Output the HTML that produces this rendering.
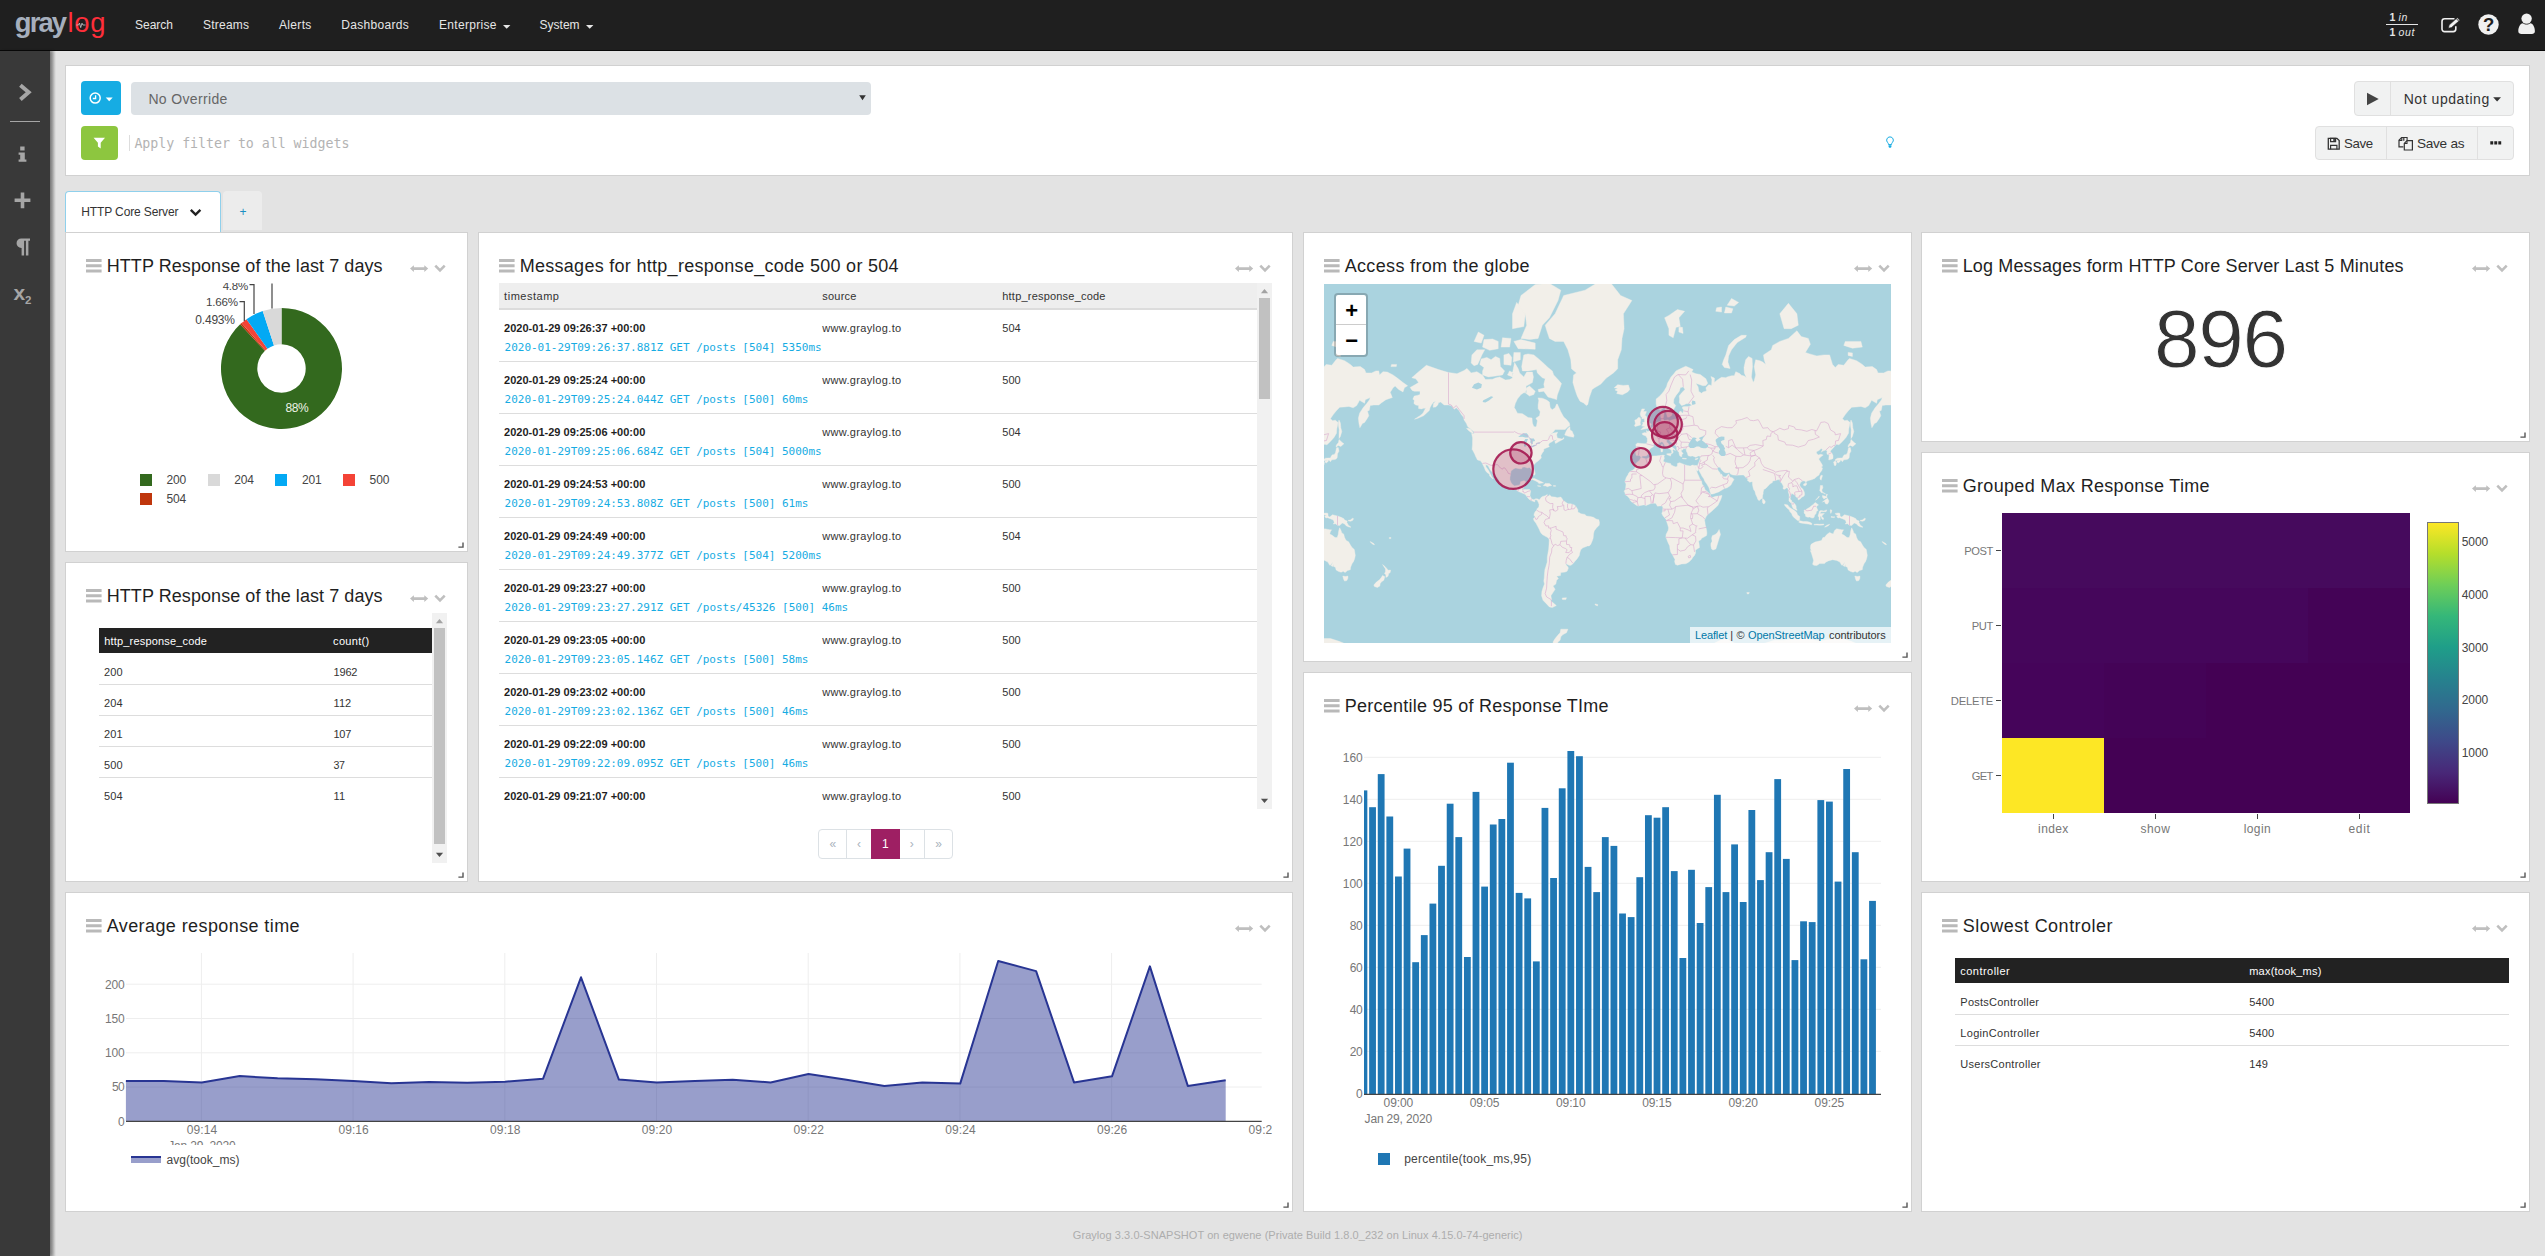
<!DOCTYPE html>
<html lang="en"><head><meta charset="utf-8"><title>Graylog - HTTP Core Server</title>
<style>
html,body{margin:0;padding:0;}
body{width:2545px;height:1256px;overflow:hidden;background:#e3e3e3;position:relative;font-family:'Liberation Sans',sans-serif;font-size:12px;color:#333;}
.t{position:absolute;white-space:pre;line-height:1;}
.a{position:absolute;box-sizing:border-box;}
.w{position:absolute;box-sizing:border-box;background:#fff;border:1px solid #d1d1d1;}
svg{position:absolute;overflow:visible;}
svg text{font-family:'Liberation Sans',sans-serif;}

</style></head>
<body>
<div class="a" style="left:0;top:0;width:2545px;height:51px;background:#1f1f1f;border-bottom:1px solid #080808"></div>
<span class="t" style="left:14.80px;top:9.00px;font-size:27.4px;color:#a6afbd;font-family:'Liberation Sans', sans-serif;font-weight:700;letter-spacing:-1.886px;">gray</span>
<span class="t" style="left:67.40px;top:9.00px;font-size:27.4px;color:#ff2e3a;font-family:'Liberation Sans', sans-serif;letter-spacing:0.719px;">log</span>
<svg style="left:76px;top:20px" width="10" height="10"><path d="M0.3 5h2.2l1-2 1.2 4.6 1.3-4.4 0.9 1.8h2.6" fill="none" stroke="#c8ccd2" stroke-width="0.8"/></svg>
<span class="t" style="left:135.00px;top:19.00px;font-size:12px;color:#e6e6e6;font-family:'Liberation Sans', sans-serif;letter-spacing:-0.006px;">Search</span>
<span class="t" style="left:203.00px;top:19.00px;font-size:12px;color:#e6e6e6;font-family:'Liberation Sans', sans-serif;letter-spacing:0.219px;">Streams</span>
<span class="t" style="left:279.00px;top:19.00px;font-size:12px;color:#e6e6e6;font-family:'Liberation Sans', sans-serif;letter-spacing:0.322px;">Alerts</span>
<span class="t" style="left:341.30px;top:19.00px;font-size:12px;color:#e6e6e6;font-family:'Liberation Sans', sans-serif;letter-spacing:0.309px;">Dashboards</span>
<span class="t" style="left:439.00px;top:19.00px;font-size:12px;color:#e6e6e6;font-family:'Liberation Sans', sans-serif;letter-spacing:0.300px;">Enterprise</span>
<span class="t" style="left:539.60px;top:19.00px;font-size:12px;color:#e6e6e6;font-family:'Liberation Sans', sans-serif;letter-spacing:-0.003px;">System</span>
<svg style="left:503px;top:24.5px" width="8" height="4"><path d="M0 0h7.4l-3.7 3.7z" fill="#e6e6e6"/></svg>
<svg style="left:585.6px;top:24.5px" width="8" height="4"><path d="M0 0h7.4l-3.7 3.7z" fill="#e6e6e6"/></svg>
<span class="t" style="left:2389.50px;top:12.00px;font-size:10.5px;color:#e6e6e6;font-family:'Liberation Sans', sans-serif;font-weight:700;">1</span>
<span class="t" style="left:2398.50px;top:12.00px;font-size:10.5px;color:#e6e6e6;font-family:'Liberation Sans', sans-serif;font-style:italic;letter-spacing:0.713px;">in</span>
<span class="t" style="left:2389.50px;top:27.00px;font-size:10.5px;color:#e6e6e6;font-family:'Liberation Sans', sans-serif;font-weight:700;">1</span>
<span class="t" style="left:2398.50px;top:27.00px;font-size:10.5px;color:#e6e6e6;font-family:'Liberation Sans', sans-serif;font-style:italic;letter-spacing:0.695px;">out</span>
<div class="a" style="left:2386px;top:24px;width:32px;height:1px;background:#e6e6e6"></div>
<svg style="left:2440px;top:16px" width="22" height="18"><path d="M14.5 2.8H4.6a2.6 2.6 0 0 0-2.6 2.6v7.6a2.6 2.6 0 0 0 2.6 2.6h8.6a2.6 2.6 0 0 0 2.6-2.6V10.2" fill="none" stroke="#f0f0f0" stroke-width="1.6"/><path d="M8.4 12.2l0.7-3.1 8.2-7.4 2.5 2.6-8.3 7.3z" fill="#f0f0f0" stroke="#1f1f1f" stroke-width="0.6"/><path d="M16.3 2.6l2.4 2.5" stroke="#1f1f1f" stroke-width="0.9"/></svg>
<svg style="left:2478px;top:13.5px" width="21" height="21"><circle cx="10.5" cy="10.5" r="10.2" fill="#f0f0f0"/></svg>
<span class="t" style="left:2482.94px;top:16.00px;font-size:18.5px;color:#1f1f1f;font-family:'Liberation Sans', sans-serif;font-weight:700;">?</span>
<svg style="left:2516px;top:12px" width="21" height="24"><circle cx="10.6" cy="6.6" r="5.2" fill="#f0f0f0"/><path d="M2.3 19.2c0-4.6 2.4-8 4.6-8 1 .9 2.3 1.4 3.7 1.4s2.7-.5 3.7-1.4c2.2 0 4.6 3.4 4.6 8 0 1.800-1.400 2.800-3 2.800H5.300c-1.600 0-3-1-3-2.800z" fill="#f0f0f0"/></svg>
<div class="a" style="left:0;top:51px;width:50px;height:1205px;background:#393939;box-shadow:3px 0 3px rgba(0,0,0,0.25)"></div>
<div class="a" style="left:50px;top:51px;width:6px;height:1205px;background:linear-gradient(to right,rgba(0,0,0,0.28),rgba(0,0,0,0))"></div>
<svg style="left:17px;top:82px" width="16" height="21"><path d="M3.400 3.200l8.300 7.100-8.300 7.100" fill="none" stroke="#a6a6a6" stroke-width="3.900"/></svg>
<div class="a" style="left:10px;top:121px;width:30px;height:1px;background:#a6a6a6"></div>
<svg style="left:18px;top:146px" width="10" height="17"><path d="M2.2 0.500h4.400v4H2.200zM0.600 6.400h6.200v7h1.600v2.400H0.600v-2.400h1.600v-4.600H0.600z" fill="#a6a6a6"/></svg>
<svg style="left:14px;top:192px" width="18" height="17"><path d="M6.700 0.400h3.600v6.100h6.100v3.600h-6.100v6.100H6.700v-6.100H0.600V6.500h6.100z" fill="#a6a6a6"/></svg>
<svg style="left:15px;top:238px" width="16" height="18"><path d="M6.300 0.400h8.700v2.400h-1.600v14.700h-2.500V2.800H9.100v14.700H6.600V9.900H6.300a4.750 4.750 0 0 1 0-9.500z" fill="#a6a6a6"/></svg>
<span class="t" style="left:13.50px;top:282.00px;font-size:21px;color:#a6a6a6;font-family:'Liberation Sans', sans-serif;font-weight:700;">x</span>
<span class="t" style="left:24.90px;top:295.00px;font-size:11.5px;color:#a6a6a6;font-family:'Liberation Sans', sans-serif;font-weight:700;">2</span>
<div class="w" style="left:65px;top:65px;width:2465px;height:111px;"></div>
<div class="a" style="left:81px;top:81px;width:40px;height:34px;background:#16ace3;border-radius:4px"></div>
<div class="a" style="left:131px;top:81.5px;width:740px;height:33px;background:#dce1e5;border-radius:4px"></div>
<span class="t" style="left:148.40px;top:92.00px;font-size:14px;color:#666;font-family:'Liberation Sans', sans-serif;letter-spacing:0.353px;">No Override</span>
<div class="a" style="left:81px;top:126px;width:37px;height:34px;background:#8dc63f;border-radius:4px"></div>
<div class="a" style="left:129px;top:135px;width:1px;height:16px;background:#ddd"></div>
<span class="t" style="left:134.40px;top:137.00px;font-size:13.3px;color:#b3b3b3;font-family:'DejaVu Sans Mono', 'Liberation Mono', monospace;letter-spacing:-0.044px;">Apply filter to all widgets</span>
<svg style="left:88px;top:91px" width="26" height="14"><circle cx="7.2" cy="7.100" r="5" fill="none" stroke="#fff" stroke-width="1.500"/><path d="M7.600 4.200v3.300H4.800" fill="none" stroke="#fff" stroke-width="1.300"/><path d="M17.700 6.500h7l-3.500 3.700z" fill="#fff"/></svg>
<svg style="left:859px;top:95px" width="8" height="6"><path d="M0.200 0.300h6.600l-3.300 5z" fill="#333"/></svg>
<svg style="left:93px;top:137px" width="13" height="13"><path d="M0.600 0.800h11.400l-4.300 4.900v5.900l-2.800-2.100V5.700z" fill="#fff"/></svg>
<svg style="left:1885px;top:136px" width="10" height="13"><path d="M5 0.900a3.300 3.300 0 0 1 2.300 5.700c-0.600 0.700-0.800 1.200-0.800 2H3.500c0-0.800-0.200-1.300-0.800-2A3.300 3.300 0 0 1 5 0.900z" fill="none" stroke="#16ace3" stroke-width="1"/><path d="M3.600 9.300h2.800v1.600l-0.700 0.900H4.300l-0.700-0.900z" fill="#16ace3"/></svg>
<div class="a" style="left:2354px;top:81px;width:160px;height:35px;background:#f1f2f2;border:1px solid #e0e0e0;border-radius:4px"></div>
<div class="a" style="left:2390px;top:82px;width:1px;height:33px;background:#e0e0e0"></div>
<span class="t" style="left:2403.70px;top:92.00px;font-size:14px;color:#333;font-family:'Liberation Sans', sans-serif;letter-spacing:0.554px;">Not updating</span>
<div class="a" style="left:2315px;top:126px;width:199px;height:34px;background:#f1f2f2;border:1px solid #e0e0e0;border-radius:4px"></div>
<div class="a" style="left:2386px;top:127px;width:1px;height:32px;background:#e0e0e0"></div>
<div class="a" style="left:2477px;top:127px;width:1px;height:32px;background:#e0e0e0"></div>
<span class="t" style="left:2343.90px;top:137.00px;font-size:13.28px;color:#333;font-family:'Liberation Sans', sans-serif;letter-spacing:-0.294px;">Save</span>
<span class="t" style="left:2416.90px;top:137.00px;font-size:13.62px;color:#333;font-family:'Liberation Sans', sans-serif;letter-spacing:-0.239px;">Save as</span>
<svg style="left:2366px;top:92px" width="14" height="14"><path d="M1 0.800l11.700 6.300L1 13.300z" fill="#444"/></svg>
<svg style="left:2493px;top:96.5px" width="9" height="5"><path d="M0.200 0.300h7.800l-3.900 4.300z" fill="#333"/></svg>
<svg style="left:2327px;top:136.500px" width="14" height="14"><path d="M1.300 1.300h8.600l2.300 2.300v8.600H1.300z" fill="none" stroke="#333" stroke-width="1.300"/><path d="M3.600 1.300h5v3.300h-5zM3.600 12.200V8.300h6.300v3.900" fill="none" stroke="#333" stroke-width="1.200"/><path d="M6.300 1.800h1.600v2.300H6.300z" fill="#333"/></svg>
<svg style="left:2398px;top:135.500px" width="16" height="16"><path d="M5.800 4.700V1.500h-2.200l-2.600 2.700v6.600h4.400" fill="none" stroke="#333" stroke-width="1.200"/><path d="M3.800 1.400v3h-2.900M5.800 1.500h3.300v3" fill="none" stroke="#333" stroke-width="1.100"/><path d="M9 4.700h5.400v9.300H6.300V7.400z" fill="none" stroke="#333" stroke-width="1.200"/><path d="M9 4.700v2.800H6.300" fill="none" stroke="#333" stroke-width="1.100"/></svg>
<svg style="left:2489.500px;top:140.500px" width="13" height="5"><path d="M0.300 0.300h2.900v3.200H0.300zM4.300 0.300h2.900v3.200H4.300zM8.300 0.300h2.900v3.200H8.300z" fill="#222"/></svg>
<div class="a" style="left:65px;top:191px;width:156px;height:42px;background:#fff;border:1px solid #8fd0ec;border-bottom:none;border-radius:4px 4px 0 0"></div>
<div class="a" style="left:223px;top:191px;width:39px;height:39px;background:#ececec;border-radius:4px 4px 0 0"></div>
<span class="t" style="left:81.30px;top:206.00px;font-size:12px;color:#333;font-family:'Liberation Sans', sans-serif;letter-spacing:-0.129px;">HTTP Core Server</span>
<span class="t" style="left:239.50px;top:206.00px;font-size:12px;color:#1a8ec2;font-family:'Liberation Sans', sans-serif;">+</span>
<svg style="left:189px;top:207px" width="14" height="11"><path d="M1.800 2.800l4.800 4.800 4.800-4.800" fill="none" stroke="#222" stroke-width="2.400"/></svg>
<div class="w" style="left:65px;top:232px;width:403px;height:320px"></div>
<svg style="left:86px;top:259px" width="16" height="14"><path d="M0 0h15.6v3H0zM0 5.2h15.6v3H0zM0 10.4h15.6v3H0z" fill="#b9b9b9"/></svg>
<span class="t" style="left:106.70px;top:257.00px;font-size:18px;color:#1f1f1f;font-family:'Liberation Sans', sans-serif;letter-spacing:0.067px;">HTTP Response of the last 7 days</span>
<svg style="left:410px;top:265px" width="19" height="8"><path d="M0 3.600l3.900-3.300v1.900h10.400V0.300l3.900 3.300-3.900 3.300V5H3.900v1.900z" fill="#bfbfbf"/></svg>
<svg style="left:433px;top:263px" width="14" height="10"><path d="M2.300 2.700l4.700 4.800 4.700-4.800" fill="none" stroke="#bfbfbf" stroke-width="2.600"/></svg>
<svg style="left:458px;top:542px" width="6" height="6"><path d="M5 0.4v4.700H0.400" fill="none" stroke="#555" stroke-width="1.400"/></svg>
<div class="w" style="left:65px;top:562px;width:403px;height:320px"></div>
<svg style="left:86px;top:589px" width="16" height="14"><path d="M0 0h15.6v3H0zM0 5.2h15.6v3H0zM0 10.4h15.6v3H0z" fill="#b9b9b9"/></svg>
<span class="t" style="left:106.70px;top:587.00px;font-size:18px;color:#1f1f1f;font-family:'Liberation Sans', sans-serif;letter-spacing:0.067px;">HTTP Response of the last 7 days</span>
<svg style="left:410px;top:595px" width="19" height="8"><path d="M0 3.600l3.900-3.300v1.900h10.400V0.300l3.900 3.300-3.900 3.300V5H3.900v1.900z" fill="#bfbfbf"/></svg>
<svg style="left:433px;top:593px" width="14" height="10"><path d="M2.300 2.700l4.700 4.800 4.700-4.800" fill="none" stroke="#bfbfbf" stroke-width="2.600"/></svg>
<svg style="left:458px;top:872px" width="6" height="6"><path d="M5 0.4v4.700H0.400" fill="none" stroke="#555" stroke-width="1.400"/></svg>
<div class="w" style="left:478px;top:232px;width:815px;height:650px"></div>
<svg style="left:499px;top:259px" width="16" height="14"><path d="M0 0h15.6v3H0zM0 5.2h15.6v3H0zM0 10.4h15.6v3H0z" fill="#b9b9b9"/></svg>
<span class="t" style="left:519.70px;top:257.00px;font-size:18px;color:#1f1f1f;font-family:'Liberation Sans', sans-serif;letter-spacing:0.284px;">Messages for http_response_code 500 or 504</span>
<svg style="left:1235px;top:265px" width="19" height="8"><path d="M0 3.600l3.900-3.300v1.900h10.400V0.300l3.900 3.300-3.900 3.300V5H3.900v1.900z" fill="#bfbfbf"/></svg>
<svg style="left:1258px;top:263px" width="14" height="10"><path d="M2.300 2.700l4.700 4.800 4.700-4.800" fill="none" stroke="#bfbfbf" stroke-width="2.600"/></svg>
<svg style="left:1283px;top:872px" width="6" height="6"><path d="M5 0.4v4.700H0.400" fill="none" stroke="#555" stroke-width="1.400"/></svg>
<div class="w" style="left:1303px;top:232px;width:609px;height:430px"></div>
<svg style="left:1324px;top:259px" width="16" height="14"><path d="M0 0h15.6v3H0zM0 5.2h15.6v3H0zM0 10.4h15.6v3H0z" fill="#b9b9b9"/></svg>
<span class="t" style="left:1344.70px;top:257.00px;font-size:18px;color:#1f1f1f;font-family:'Liberation Sans', sans-serif;letter-spacing:0.340px;">Access from the globe</span>
<svg style="left:1854px;top:265px" width="19" height="8"><path d="M0 3.600l3.900-3.300v1.900h10.400V0.300l3.900 3.300-3.900 3.300V5H3.900v1.900z" fill="#bfbfbf"/></svg>
<svg style="left:1877px;top:263px" width="14" height="10"><path d="M2.300 2.700l4.700 4.800 4.700-4.800" fill="none" stroke="#bfbfbf" stroke-width="2.600"/></svg>
<svg style="left:1902px;top:652px" width="6" height="6"><path d="M5 0.4v4.700H0.400" fill="none" stroke="#555" stroke-width="1.400"/></svg>
<div class="w" style="left:1303px;top:672px;width:609px;height:540px"></div>
<svg style="left:1324px;top:699px" width="16" height="14"><path d="M0 0h15.6v3H0zM0 5.2h15.6v3H0zM0 10.4h15.6v3H0z" fill="#b9b9b9"/></svg>
<span class="t" style="left:1344.70px;top:697.00px;font-size:18px;color:#1f1f1f;font-family:'Liberation Sans', sans-serif;letter-spacing:0.244px;">Percentile 95 of Response TIme</span>
<svg style="left:1854px;top:705px" width="19" height="8"><path d="M0 3.600l3.900-3.300v1.900h10.400V0.300l3.900 3.300-3.900 3.300V5H3.900v1.900z" fill="#bfbfbf"/></svg>
<svg style="left:1877px;top:703px" width="14" height="10"><path d="M2.300 2.700l4.700 4.800 4.700-4.800" fill="none" stroke="#bfbfbf" stroke-width="2.600"/></svg>
<svg style="left:1902px;top:1202px" width="6" height="6"><path d="M5 0.4v4.700H0.400" fill="none" stroke="#555" stroke-width="1.400"/></svg>
<div class="w" style="left:1921px;top:232px;width:609px;height:210px"></div>
<svg style="left:1942px;top:259px" width="16" height="14"><path d="M0 0h15.6v3H0zM0 5.2h15.6v3H0zM0 10.4h15.6v3H0z" fill="#b9b9b9"/></svg>
<span class="t" style="left:1962.70px;top:257.00px;font-size:18px;color:#1f1f1f;font-family:'Liberation Sans', sans-serif;letter-spacing:0.147px;">Log Messages form HTTP Core Server Last 5 Minutes</span>
<svg style="left:2472px;top:265px" width="19" height="8"><path d="M0 3.600l3.900-3.300v1.900h10.400V0.300l3.900 3.300-3.900 3.300V5H3.900v1.900z" fill="#bfbfbf"/></svg>
<svg style="left:2495px;top:263px" width="14" height="10"><path d="M2.300 2.700l4.700 4.800 4.700-4.800" fill="none" stroke="#bfbfbf" stroke-width="2.600"/></svg>
<svg style="left:2520px;top:432px" width="6" height="6"><path d="M5 0.4v4.700H0.400" fill="none" stroke="#555" stroke-width="1.400"/></svg>
<div class="w" style="left:1921px;top:452px;width:609px;height:430px"></div>
<svg style="left:1942px;top:479px" width="16" height="14"><path d="M0 0h15.6v3H0zM0 5.2h15.6v3H0zM0 10.4h15.6v3H0z" fill="#b9b9b9"/></svg>
<span class="t" style="left:1962.70px;top:477.00px;font-size:18px;color:#1f1f1f;font-family:'Liberation Sans', sans-serif;letter-spacing:0.324px;">Grouped Max Response Time</span>
<svg style="left:2472px;top:485px" width="19" height="8"><path d="M0 3.600l3.900-3.300v1.900h10.400V0.300l3.900 3.300-3.900 3.300V5H3.900v1.900z" fill="#bfbfbf"/></svg>
<svg style="left:2495px;top:483px" width="14" height="10"><path d="M2.300 2.700l4.700 4.800 4.700-4.800" fill="none" stroke="#bfbfbf" stroke-width="2.600"/></svg>
<svg style="left:2520px;top:872px" width="6" height="6"><path d="M5 0.4v4.700H0.400" fill="none" stroke="#555" stroke-width="1.400"/></svg>
<div class="w" style="left:1921px;top:892px;width:609px;height:320px"></div>
<svg style="left:1942px;top:919px" width="16" height="14"><path d="M0 0h15.6v3H0zM0 5.2h15.6v3H0zM0 10.4h15.6v3H0z" fill="#b9b9b9"/></svg>
<span class="t" style="left:1962.70px;top:917.00px;font-size:18px;color:#1f1f1f;font-family:'Liberation Sans', sans-serif;letter-spacing:0.490px;">Slowest Controler</span>
<svg style="left:2472px;top:925px" width="19" height="8"><path d="M0 3.600l3.900-3.300v1.900h10.400V0.300l3.900 3.300-3.900 3.300V5H3.900v1.900z" fill="#bfbfbf"/></svg>
<svg style="left:2495px;top:923px" width="14" height="10"><path d="M2.300 2.700l4.700 4.800 4.700-4.800" fill="none" stroke="#bfbfbf" stroke-width="2.600"/></svg>
<svg style="left:2520px;top:1202px" width="6" height="6"><path d="M5 0.4v4.700H0.400" fill="none" stroke="#555" stroke-width="1.400"/></svg>
<div class="w" style="left:65px;top:892px;width:1228px;height:320px"></div>
<svg style="left:86px;top:919px" width="16" height="14"><path d="M0 0h15.6v3H0zM0 5.2h15.6v3H0zM0 10.4h15.6v3H0z" fill="#b9b9b9"/></svg>
<span class="t" style="left:106.70px;top:917.00px;font-size:18px;color:#1f1f1f;font-family:'Liberation Sans', sans-serif;letter-spacing:0.406px;">Average response time</span>
<svg style="left:1235px;top:925px" width="19" height="8"><path d="M0 3.600l3.900-3.300v1.900h10.400V0.300l3.900 3.300-3.900 3.300V5H3.900v1.900z" fill="#bfbfbf"/></svg>
<svg style="left:1258px;top:923px" width="14" height="10"><path d="M2.300 2.700l4.700 4.800 4.700-4.800" fill="none" stroke="#bfbfbf" stroke-width="2.600"/></svg>
<svg style="left:1283px;top:1202px" width="6" height="6"><path d="M5 0.4v4.700H0.400" fill="none" stroke="#555" stroke-width="1.400"/></svg>
<span class="t" style="left:1072.80px;top:1230.00px;font-size:11px;color:#adadad;font-family:'Liberation Sans', sans-serif;letter-spacing:0.057px;">Graylog 3.3.0-SNAPSHOT on egwene (Private Build 1.8.0_232 on Linux 4.15.0-74-generic)</span>
<svg style="left:66px;top:284px" width="401" height="236" viewBox="66 284 401 236"><defs><clipPath id="pc"><rect x="66" y="283.5" width="401" height="240"/></clipPath></defs><g clip-path="url(#pc)"><path d="M281.50 308.00A60.5 60.5 0 1 1 240.14 324.34L264.96 350.84A24.2 24.2 0 1 0 281.50 344.30Z" fill="#33691e"/><path d="M240.14 324.34A60.5 60.5 0 0 1 241.53 323.08L265.51 350.33A24.2 24.2 0 0 0 264.96 350.84Z" fill="#bf360c"/><path d="M241.53 323.08A60.5 60.5 0 0 1 246.48 319.17L267.49 348.77A24.2 24.2 0 0 0 265.51 350.33Z" fill="#f44336"/><path d="M246.48 319.17A60.5 60.5 0 0 1 262.72 310.99L273.99 345.50A24.2 24.2 0 0 0 267.49 348.77Z" fill="#03a9f4"/><path d="M262.72 310.99A60.5 60.5 0 0 1 281.50 308.00L281.50 344.30A24.2 24.2 0 0 0 273.99 345.50Z" fill="#d9d9d9"/><path d="M249.5 284.7H254V314M239.5 301.7H244.3V321M272 280V308.5" fill="none" stroke="#444" stroke-width="1.2"/></g></svg>
<div class="a" style="left:200px;top:283px;width:60px;height:12px;overflow:hidden"><span class="t" style="left:22.70px;top:-2.00px;font-size:11.52px;color:#444;font-family:'Liberation Sans', sans-serif;letter-spacing:-0.255px;">4.8%</span></div>
<span class="t" style="left:206.10px;top:296.00px;font-size:11.62px;color:#444;font-family:'Liberation Sans', sans-serif;letter-spacing:-0.240px;">1.66%</span>
<span class="t" style="left:195.30px;top:314.00px;font-size:12px;color:#444;font-family:'Liberation Sans', sans-serif;letter-spacing:-0.201px;">0.493%</span>
<span class="t" style="left:285.50px;top:402.00px;font-size:12px;color:#eef3e6;font-family:'Liberation Sans', sans-serif;letter-spacing:-0.416px;">88%</span>
<div class="a" style="left:140.0px;top:474px;width:12px;height:12px;background:#33691e"></div>
<span class="t" style="left:166.50px;top:474.00px;font-size:12px;color:#444;font-family:'Liberation Sans', sans-serif;letter-spacing:-0.116px;">200</span>
<div class="a" style="left:207.7px;top:474px;width:12px;height:12px;background:#d9d9d9"></div>
<span class="t" style="left:234.20px;top:474.00px;font-size:12px;color:#444;font-family:'Liberation Sans', sans-serif;letter-spacing:-0.116px;">204</span>
<div class="a" style="left:275.4px;top:474px;width:12px;height:12px;background:#03a9f4"></div>
<span class="t" style="left:301.90px;top:474.00px;font-size:12px;color:#444;font-family:'Liberation Sans', sans-serif;letter-spacing:-0.116px;">201</span>
<div class="a" style="left:343.1px;top:474px;width:12px;height:12px;background:#f44336"></div>
<span class="t" style="left:369.60px;top:474.00px;font-size:12px;color:#444;font-family:'Liberation Sans', sans-serif;letter-spacing:-0.116px;">500</span>
<div class="a" style="left:140.0px;top:493px;width:12px;height:12px;background:#bf360c"></div>
<span class="t" style="left:166.50px;top:493.00px;font-size:12px;color:#444;font-family:'Liberation Sans', sans-serif;letter-spacing:-0.116px;">504</span>
<div class="a" style="left:99px;top:628px;width:333px;height:25px;background:#222"></div>
<span class="t" style="left:104.20px;top:636.00px;font-size:11px;color:#fff;font-family:'Liberation Sans', sans-serif;letter-spacing:0.183px;">http_response_code</span>
<span class="t" style="left:333.10px;top:636.00px;font-size:11px;color:#fff;font-family:'Liberation Sans', sans-serif;letter-spacing:0.308px;">count()</span>
<span class="t" style="left:104.10px;top:667.00px;font-size:11px;color:#333;font-family:'Liberation Sans', sans-serif;letter-spacing:0.120px;">200</span>
<span class="t" style="left:333.50px;top:667.00px;font-size:11px;color:#333;font-family:'Liberation Sans', sans-serif;letter-spacing:-0.161px;">1962</span>
<div class="a" style="left:99px;top:684px;width:333px;height:1px;background:#ddd"></div>
<span class="t" style="left:104.10px;top:698.00px;font-size:11px;color:#333;font-family:'Liberation Sans', sans-serif;letter-spacing:0.120px;">204</span>
<span class="t" style="left:333.50px;top:698.00px;font-size:11px;color:#333;font-family:'Liberation Sans', sans-serif;letter-spacing:0.102px;">112</span>
<div class="a" style="left:99px;top:715px;width:333px;height:1px;background:#ddd"></div>
<span class="t" style="left:104.10px;top:729.00px;font-size:11px;color:#333;font-family:'Liberation Sans', sans-serif;letter-spacing:0.120px;">201</span>
<span class="t" style="left:333.50px;top:729.00px;font-size:11px;color:#333;font-family:'Liberation Sans', sans-serif;letter-spacing:-0.305px;">107</span>
<div class="a" style="left:99px;top:746px;width:333px;height:1px;background:#ddd"></div>
<span class="t" style="left:104.10px;top:760.00px;font-size:11px;color:#333;font-family:'Liberation Sans', sans-serif;letter-spacing:0.120px;">500</span>
<span class="t" style="left:333.50px;top:760.00px;font-size:10.64px;color:#333;font-family:'Liberation Sans', sans-serif;letter-spacing:-0.345px;">37</span>
<div class="a" style="left:99px;top:777px;width:333px;height:1px;background:#ddd"></div>
<span class="t" style="left:104.10px;top:791.00px;font-size:11px;color:#333;font-family:'Liberation Sans', sans-serif;letter-spacing:0.120px;">504</span>
<span class="t" style="left:333.50px;top:791.00px;font-size:11px;color:#333;font-family:'Liberation Sans', sans-serif;letter-spacing:0.078px;">11</span>
<div class="a" style="left:432px;top:613px;width:15px;height:250px;background:#f1f1f1"></div>
<div class="a" style="left:434px;top:628px;width:11px;height:216px;background:#c1c1c1"></div>
<svg style="left:432px;top:613px" width="15" height="250"><path d="M3.9 10.2l3.600 -4.300 3.600 4.300z" fill="#a3a3a3"/><path d="M3.9 239.8l3.600 4.300 3.600 -4.300z" fill="#505050"/></svg>
<div class="a" style="left:499px;top:283px;width:758px;height:27px;background:#eee;border-bottom:2px solid #dcdcdc"></div>
<span class="t" style="left:504.10px;top:291.00px;font-size:11px;color:#333;font-family:'Liberation Sans', sans-serif;letter-spacing:0.519px;">timestamp</span>
<span class="t" style="left:822.20px;top:291.00px;font-size:11px;color:#333;font-family:'Liberation Sans', sans-serif;letter-spacing:0.254px;">source</span>
<span class="t" style="left:1002.30px;top:291.00px;font-size:11px;color:#333;font-family:'Liberation Sans', sans-serif;letter-spacing:0.201px;">http_response_code</span>
<div class="a" style="left:499px;top:310px;width:758px;height:497px;overflow:hidden">
<span class="t" style="left:5.10px;top:13.00px;font-size:11px;color:#1f1f1f;font-family:'Liberation Sans', sans-serif;font-weight:700;letter-spacing:0.009px;">2020-01-29 09:26:37 +00:00</span>
<span class="t" style="left:323.20px;top:13.00px;font-size:11px;color:#333;font-family:'Liberation Sans', sans-serif;letter-spacing:0.339px;">www.graylog.to</span>
<span class="t" style="left:503.30px;top:13.00px;font-size:11px;color:#333;font-family:'Liberation Sans', sans-serif;letter-spacing:-0.030px;">504</span>
<span class="t" style="left:5.60px;top:32.00px;font-size:11px;color:#16ace3;font-family:'DejaVu Sans Mono', 'Liberation Mono', monospace;letter-spacing:-0.018px;">2020-01-29T09:26:37.881Z GET /posts [504] 5350ms</span>
<div class="a" style="left:0;top:51px;width:758px;height:1px;background:#ddd"></div>
<span class="t" style="left:5.10px;top:65.00px;font-size:11px;color:#1f1f1f;font-family:'Liberation Sans', sans-serif;font-weight:700;letter-spacing:0.009px;">2020-01-29 09:25:24 +00:00</span>
<span class="t" style="left:323.20px;top:65.00px;font-size:11px;color:#333;font-family:'Liberation Sans', sans-serif;letter-spacing:0.339px;">www.graylog.to</span>
<span class="t" style="left:503.30px;top:65.00px;font-size:11px;color:#333;font-family:'Liberation Sans', sans-serif;letter-spacing:-0.030px;">500</span>
<span class="t" style="left:5.60px;top:84.00px;font-size:11px;color:#16ace3;font-family:'DejaVu Sans Mono', 'Liberation Mono', monospace;letter-spacing:-0.018px;">2020-01-29T09:25:24.044Z GET /posts [500] 60ms</span>
<div class="a" style="left:0;top:103px;width:758px;height:1px;background:#ddd"></div>
<span class="t" style="left:5.10px;top:117.00px;font-size:11px;color:#1f1f1f;font-family:'Liberation Sans', sans-serif;font-weight:700;letter-spacing:0.009px;">2020-01-29 09:25:06 +00:00</span>
<span class="t" style="left:323.20px;top:117.00px;font-size:11px;color:#333;font-family:'Liberation Sans', sans-serif;letter-spacing:0.339px;">www.graylog.to</span>
<span class="t" style="left:503.30px;top:117.00px;font-size:11px;color:#333;font-family:'Liberation Sans', sans-serif;letter-spacing:-0.030px;">504</span>
<span class="t" style="left:5.60px;top:136.00px;font-size:11px;color:#16ace3;font-family:'DejaVu Sans Mono', 'Liberation Mono', monospace;letter-spacing:-0.018px;">2020-01-29T09:25:06.684Z GET /posts [504] 5000ms</span>
<div class="a" style="left:0;top:155px;width:758px;height:1px;background:#ddd"></div>
<span class="t" style="left:5.10px;top:169.00px;font-size:11px;color:#1f1f1f;font-family:'Liberation Sans', sans-serif;font-weight:700;letter-spacing:0.009px;">2020-01-29 09:24:53 +00:00</span>
<span class="t" style="left:323.20px;top:169.00px;font-size:11px;color:#333;font-family:'Liberation Sans', sans-serif;letter-spacing:0.339px;">www.graylog.to</span>
<span class="t" style="left:503.30px;top:169.00px;font-size:11px;color:#333;font-family:'Liberation Sans', sans-serif;letter-spacing:-0.030px;">500</span>
<span class="t" style="left:5.60px;top:188.00px;font-size:11px;color:#16ace3;font-family:'DejaVu Sans Mono', 'Liberation Mono', monospace;letter-spacing:-0.018px;">2020-01-29T09:24:53.808Z GET /posts [500] 61ms</span>
<div class="a" style="left:0;top:207px;width:758px;height:1px;background:#ddd"></div>
<span class="t" style="left:5.10px;top:221.00px;font-size:11px;color:#1f1f1f;font-family:'Liberation Sans', sans-serif;font-weight:700;letter-spacing:0.009px;">2020-01-29 09:24:49 +00:00</span>
<span class="t" style="left:323.20px;top:221.00px;font-size:11px;color:#333;font-family:'Liberation Sans', sans-serif;letter-spacing:0.339px;">www.graylog.to</span>
<span class="t" style="left:503.30px;top:221.00px;font-size:11px;color:#333;font-family:'Liberation Sans', sans-serif;letter-spacing:-0.030px;">504</span>
<span class="t" style="left:5.60px;top:240.00px;font-size:11px;color:#16ace3;font-family:'DejaVu Sans Mono', 'Liberation Mono', monospace;letter-spacing:-0.018px;">2020-01-29T09:24:49.377Z GET /posts [504] 5200ms</span>
<div class="a" style="left:0;top:259px;width:758px;height:1px;background:#ddd"></div>
<span class="t" style="left:5.10px;top:273.00px;font-size:11px;color:#1f1f1f;font-family:'Liberation Sans', sans-serif;font-weight:700;letter-spacing:0.009px;">2020-01-29 09:23:27 +00:00</span>
<span class="t" style="left:323.20px;top:273.00px;font-size:11px;color:#333;font-family:'Liberation Sans', sans-serif;letter-spacing:0.339px;">www.graylog.to</span>
<span class="t" style="left:503.30px;top:273.00px;font-size:11px;color:#333;font-family:'Liberation Sans', sans-serif;letter-spacing:-0.030px;">500</span>
<span class="t" style="left:5.60px;top:292.00px;font-size:11px;color:#16ace3;font-family:'DejaVu Sans Mono', 'Liberation Mono', monospace;letter-spacing:-0.016px;">2020-01-29T09:23:27.291Z GET /posts/45326 [500] 46ms</span>
<div class="a" style="left:0;top:311px;width:758px;height:1px;background:#ddd"></div>
<span class="t" style="left:5.10px;top:325.00px;font-size:11px;color:#1f1f1f;font-family:'Liberation Sans', sans-serif;font-weight:700;letter-spacing:0.009px;">2020-01-29 09:23:05 +00:00</span>
<span class="t" style="left:323.20px;top:325.00px;font-size:11px;color:#333;font-family:'Liberation Sans', sans-serif;letter-spacing:0.339px;">www.graylog.to</span>
<span class="t" style="left:503.30px;top:325.00px;font-size:11px;color:#333;font-family:'Liberation Sans', sans-serif;letter-spacing:-0.030px;">500</span>
<span class="t" style="left:5.60px;top:344.00px;font-size:11px;color:#16ace3;font-family:'DejaVu Sans Mono', 'Liberation Mono', monospace;letter-spacing:-0.018px;">2020-01-29T09:23:05.146Z GET /posts [500] 58ms</span>
<div class="a" style="left:0;top:363px;width:758px;height:1px;background:#ddd"></div>
<span class="t" style="left:5.10px;top:377.00px;font-size:11px;color:#1f1f1f;font-family:'Liberation Sans', sans-serif;font-weight:700;letter-spacing:0.009px;">2020-01-29 09:23:02 +00:00</span>
<span class="t" style="left:323.20px;top:377.00px;font-size:11px;color:#333;font-family:'Liberation Sans', sans-serif;letter-spacing:0.339px;">www.graylog.to</span>
<span class="t" style="left:503.30px;top:377.00px;font-size:11px;color:#333;font-family:'Liberation Sans', sans-serif;letter-spacing:-0.030px;">500</span>
<span class="t" style="left:5.60px;top:396.00px;font-size:11px;color:#16ace3;font-family:'DejaVu Sans Mono', 'Liberation Mono', monospace;letter-spacing:-0.018px;">2020-01-29T09:23:02.136Z GET /posts [500] 46ms</span>
<div class="a" style="left:0;top:415px;width:758px;height:1px;background:#ddd"></div>
<span class="t" style="left:5.10px;top:429.00px;font-size:11px;color:#1f1f1f;font-family:'Liberation Sans', sans-serif;font-weight:700;letter-spacing:0.009px;">2020-01-29 09:22:09 +00:00</span>
<span class="t" style="left:323.20px;top:429.00px;font-size:11px;color:#333;font-family:'Liberation Sans', sans-serif;letter-spacing:0.339px;">www.graylog.to</span>
<span class="t" style="left:503.30px;top:429.00px;font-size:11px;color:#333;font-family:'Liberation Sans', sans-serif;letter-spacing:-0.030px;">500</span>
<span class="t" style="left:5.60px;top:448.00px;font-size:11px;color:#16ace3;font-family:'DejaVu Sans Mono', 'Liberation Mono', monospace;letter-spacing:-0.018px;">2020-01-29T09:22:09.095Z GET /posts [500] 46ms</span>
<div class="a" style="left:0;top:467px;width:758px;height:1px;background:#ddd"></div>
<span class="t" style="left:5.10px;top:481.00px;font-size:11px;color:#1f1f1f;font-family:'Liberation Sans', sans-serif;font-weight:700;letter-spacing:0.009px;">2020-01-29 09:21:07 +00:00</span>
<span class="t" style="left:323.20px;top:481.00px;font-size:11px;color:#333;font-family:'Liberation Sans', sans-serif;letter-spacing:0.339px;">www.graylog.to</span>
<span class="t" style="left:503.30px;top:481.00px;font-size:11px;color:#333;font-family:'Liberation Sans', sans-serif;letter-spacing:-0.030px;">500</span>
<span class="t" style="left:5.60px;top:500.00px;font-size:11px;color:#16ace3;font-family:'DejaVu Sans Mono', 'Liberation Mono', monospace;letter-spacing:-0.018px;">2020-01-29T09:21:07.512Z GET /posts [500] 52ms</span>
<div class="a" style="left:0;top:519px;width:758px;height:1px;background:#ddd"></div>
</div>
<div class="a" style="left:1257px;top:283px;width:15px;height:526px;background:#f1f1f1"></div>
<div class="a" style="left:1259px;top:298px;width:11px;height:101px;background:#c1c1c1"></div>
<svg style="left:1257px;top:283px" width="15" height="526"><path d="M3.9 10.2l3.600 -4.300 3.600 4.300z" fill="#a3a3a3"/><path d="M3.9 515.8l3.600 4.300 3.600 -4.300z" fill="#505050"/></svg>
<div class="a" style="left:818px;top:829px;width:135px;height:30px;border:1px solid #dce1e5;border-radius:4px;background:#fff"></div>
<div class="a" style="left:846px;top:830px;width:1px;height:28px;background:#dce1e5"></div>
<div class="a" style="left:924px;top:830px;width:1px;height:28px;background:#dce1e5"></div>
<div class="a" style="left:871px;top:829px;width:29px;height:30px;background:#9e1f63"></div>
<span class="t" style="left:829.46px;top:838.00px;font-size:12px;color:#a9b3bd;font-family:'Liberation Sans', sans-serif;">«</span>
<span class="t" style="left:857.00px;top:838.00px;font-size:12px;color:#a9b3bd;font-family:'Liberation Sans', sans-serif;">‹</span>
<span class="t" style="left:881.96px;top:838.00px;font-size:12px;color:#fff;font-family:'Liberation Sans', sans-serif;">1</span>
<span class="t" style="left:909.80px;top:838.00px;font-size:12px;color:#a9b3bd;font-family:'Liberation Sans', sans-serif;">›</span>
<span class="t" style="left:935.16px;top:838.00px;font-size:12px;color:#a9b3bd;font-family:'Liberation Sans', sans-serif;">»</span>
<span class="t" style="left:2153.90px;top:298.00px;font-size:82px;color:#333;font-family:'Liberation Sans', sans-serif;letter-spacing:-1.3px;-webkit-text-stroke:0.9px #fff;">896</span>
<svg style="left:1922px;top:500px" width="607" height="350" viewBox="1922 500 607 350"><defs><linearGradient id="vir" x1="0" y1="1" x2="0" y2="0"><stop offset="0" stop-color="#440154"/><stop offset="0.111" stop-color="#482878"/><stop offset="0.222" stop-color="#3e4989"/><stop offset="0.333" stop-color="#31688e"/><stop offset="0.444" stop-color="#26828e"/><stop offset="0.556" stop-color="#1f9e89"/><stop offset="0.667" stop-color="#35b779"/><stop offset="0.778" stop-color="#6ece58"/><stop offset="0.889" stop-color="#b5de2b"/><stop offset="1" stop-color="#fde725"/></linearGradient></defs><rect x="2002" y="513" width="408" height="300" fill="#440154"/><rect x="2002" y="513" width="102" height="75" fill="#460a5d"/><rect x="2104" y="513" width="102" height="75" fill="#460a5d"/><rect x="2206" y="513" width="102" height="75" fill="#460a5d"/><rect x="2308" y="513" width="102" height="75" fill="#460a5d"/><rect x="2002" y="588" width="102" height="75" fill="#45065b"/><rect x="2104" y="588" width="102" height="75" fill="#45065b"/><rect x="2206" y="588" width="102" height="75" fill="#45065b"/><rect x="2308" y="588" width="102" height="75" fill="#440356"/><rect x="2002" y="663" width="102" height="75" fill="#45045a"/><rect x="2104" y="663" width="102" height="75" fill="#440357"/><rect x="2002" y="738" width="102" height="75" fill="#fde725"/><path d="M1996 550.5h5M1996 625.5h5M1996 700.5h5M1996 775.5h5M2053.5 814v5M2155.5 814v5M2257.5 814v5M2359.5 814v5" stroke="#444" stroke-width="1" fill="none"/><rect x="2427.5" y="522.5" width="31" height="281" fill="url(#vir)" stroke="#777" stroke-width="1"/></svg>
<span class="t" style="left:1964.20px;top:546.00px;font-size:11.16px;color:#777;font-family:'Liberation Sans', sans-serif;letter-spacing:-0.428px;">POST</span>
<span class="t" style="left:1971.80px;top:621.00px;font-size:11.16px;color:#777;font-family:'Liberation Sans', sans-serif;letter-spacing:-0.410px;">PUT</span>
<span class="t" style="left:1950.80px;top:696.00px;font-size:11.25px;color:#777;font-family:'Liberation Sans', sans-serif;letter-spacing:-0.255px;">DELETE</span>
<span class="t" style="left:1971.80px;top:771.00px;font-size:11.16px;color:#777;font-family:'Liberation Sans', sans-serif;letter-spacing:-0.722px;">GET</span>
<span class="t" style="left:2038.10px;top:823.00px;font-size:12px;color:#777;font-family:'Liberation Sans', sans-serif;letter-spacing:0.378px;">index</span>
<span class="t" style="left:2140.40px;top:823.00px;font-size:12px;color:#777;font-family:'Liberation Sans', sans-serif;letter-spacing:0.528px;">show</span>
<span class="t" style="left:2243.65px;top:823.00px;font-size:12px;color:#777;font-family:'Liberation Sans', sans-serif;letter-spacing:0.435px;">login</span>
<span class="t" style="left:2348.55px;top:823.00px;font-size:12px;color:#777;font-family:'Liberation Sans', sans-serif;letter-spacing:0.647px;">edit</span>
<span class="t" style="left:2461.70px;top:536.00px;font-size:12px;color:#444;font-family:'Liberation Sans', sans-serif;letter-spacing:-0.068px;">5000</span>
<span class="t" style="left:2461.70px;top:589.00px;font-size:12px;color:#444;font-family:'Liberation Sans', sans-serif;letter-spacing:-0.068px;">4000</span>
<span class="t" style="left:2461.70px;top:642.00px;font-size:12px;color:#444;font-family:'Liberation Sans', sans-serif;letter-spacing:-0.068px;">3000</span>
<span class="t" style="left:2461.70px;top:694.00px;font-size:12px;color:#444;font-family:'Liberation Sans', sans-serif;letter-spacing:-0.068px;">2000</span>
<span class="t" style="left:2461.70px;top:747.00px;font-size:12px;color:#444;font-family:'Liberation Sans', sans-serif;letter-spacing:-0.068px;">1000</span>
<div class="a" style="left:1955px;top:958px;width:554px;height:25px;background:#222"></div>
<span class="t" style="left:1960.30px;top:966.00px;font-size:11px;color:#fff;font-family:'Liberation Sans', sans-serif;letter-spacing:0.461px;">controller</span>
<span class="t" style="left:2249.20px;top:966.00px;font-size:11px;color:#fff;font-family:'Liberation Sans', sans-serif;letter-spacing:0.228px;">max(took_ms)</span>
<span class="t" style="left:1960.30px;top:997.00px;font-size:11px;color:#333;font-family:'Liberation Sans', sans-serif;letter-spacing:0.250px;">PostsController</span>
<span class="t" style="left:2249.20px;top:997.00px;font-size:11px;color:#333;font-family:'Liberation Sans', sans-serif;letter-spacing:0.139px;">5400</span>
<div class="a" style="left:1955px;top:1014px;width:554px;height:1px;background:#ddd"></div>
<span class="t" style="left:1960.30px;top:1028.00px;font-size:11px;color:#333;font-family:'Liberation Sans', sans-serif;letter-spacing:0.314px;">LoginController</span>
<span class="t" style="left:2249.20px;top:1028.00px;font-size:11px;color:#333;font-family:'Liberation Sans', sans-serif;letter-spacing:0.139px;">5400</span>
<div class="a" style="left:1955px;top:1045px;width:554px;height:1px;background:#ddd"></div>
<span class="t" style="left:1960.30px;top:1059.00px;font-size:11px;color:#333;font-family:'Liberation Sans', sans-serif;letter-spacing:0.270px;">UsersController</span>
<span class="t" style="left:2249.20px;top:1059.00px;font-size:11px;color:#333;font-family:'Liberation Sans', sans-serif;letter-spacing:0.120px;">149</span>
<svg style="left:1304px;top:740px" width="607" height="440" viewBox="1304 740 607 440"><defs><clipPath id="bc"><rect x="1364" y="740" width="517" height="360"/></clipPath></defs><path d="M1364 1051.3H1881M1364 1009.3H1881M1364 967.3H1881M1364 925.3H1881M1364 883.3H1881M1364 841.3H1881M1364 799.3H1881M1364 757.3H1881" stroke="#eee" stroke-width="1" fill="none"/><g clip-path="url(#bc)" fill="#1f77b4"><rect x="1360.53" y="790.4" width="6.800" height="303.8"/><rect x="1369.15" y="807.2" width="6.800" height="287.0"/><rect x="1377.77" y="774.1" width="6.800" height="320.1"/><rect x="1386.39" y="816.5" width="6.800" height="277.7"/><rect x="1395.01" y="876.5" width="6.800" height="217.7"/><rect x="1403.63" y="848.6" width="6.800" height="245.6"/><rect x="1412.25" y="962.2" width="6.800" height="132.0"/><rect x="1420.87" y="935.1" width="6.800" height="159.1"/><rect x="1429.49" y="903.6" width="6.800" height="190.6"/><rect x="1438.11" y="865.8" width="6.800" height="228.4"/><rect x="1446.73" y="803.7" width="6.800" height="290.5"/><rect x="1455.35" y="837.1" width="6.800" height="257.1"/><rect x="1463.97" y="957.0" width="6.800" height="137.2"/><rect x="1472.59" y="791.9" width="6.800" height="302.3"/><rect x="1481.21" y="886.6" width="6.800" height="207.6"/><rect x="1489.83" y="824.5" width="6.800" height="269.7"/><rect x="1498.45" y="819.0" width="6.800" height="275.2"/><rect x="1507.07" y="762.7" width="6.800" height="331.5"/><rect x="1515.69" y="892.9" width="6.800" height="201.3"/><rect x="1524.31" y="898.4" width="6.800" height="195.8"/><rect x="1532.93" y="961.4" width="6.800" height="132.8"/><rect x="1541.55" y="807.9" width="6.800" height="286.3"/><rect x="1550.17" y="878.0" width="6.800" height="216.2"/><rect x="1558.79" y="788.3" width="6.800" height="305.9"/><rect x="1567.41" y="751.0" width="6.800" height="343.2"/><rect x="1576.03" y="756.2" width="6.800" height="338.0"/><rect x="1584.65" y="866.9" width="6.800" height="227.3"/><rect x="1593.27" y="892.1" width="6.800" height="202.1"/><rect x="1601.89" y="837.1" width="6.800" height="257.1"/><rect x="1610.51" y="845.9" width="6.800" height="248.3"/><rect x="1619.13" y="913.5" width="6.800" height="180.7"/><rect x="1627.75" y="917.1" width="6.800" height="177.1"/><rect x="1636.37" y="877.2" width="6.800" height="217.0"/><rect x="1644.99" y="815.2" width="6.800" height="279.0"/><rect x="1653.61" y="817.7" width="6.800" height="276.5"/><rect x="1662.23" y="807.2" width="6.800" height="287.0"/><rect x="1670.85" y="871.1" width="6.800" height="223.1"/><rect x="1679.47" y="958.0" width="6.800" height="136.2"/><rect x="1688.09" y="869.8" width="6.800" height="224.4"/><rect x="1696.71" y="923.0" width="6.800" height="171.2"/><rect x="1705.33" y="887.1" width="6.800" height="207.1"/><rect x="1713.95" y="794.8" width="6.800" height="299.4"/><rect x="1722.57" y="892.1" width="6.800" height="202.1"/><rect x="1731.19" y="844.4" width="6.800" height="249.8"/><rect x="1739.81" y="902.0" width="6.800" height="192.2"/><rect x="1748.43" y="810.0" width="6.800" height="284.2"/><rect x="1757.05" y="880.1" width="6.800" height="214.1"/><rect x="1765.67" y="852.2" width="6.800" height="242.0"/><rect x="1774.29" y="779.1" width="6.800" height="315.1"/><rect x="1782.91" y="858.9" width="6.800" height="235.3"/><rect x="1791.53" y="960.1" width="6.800" height="134.1"/><rect x="1800.15" y="921.3" width="6.800" height="172.9"/><rect x="1808.77" y="922.1" width="6.800" height="172.1"/><rect x="1817.39" y="800.1" width="6.800" height="294.1"/><rect x="1826.01" y="801.6" width="6.800" height="292.6"/><rect x="1834.63" y="881.6" width="6.800" height="212.6"/><rect x="1843.25" y="769.0" width="6.800" height="325.2"/><rect x="1851.87" y="852.2" width="6.800" height="242.0"/><rect x="1860.49" y="959.3" width="6.800" height="134.9"/><rect x="1869.11" y="900.9" width="6.800" height="193.3"/></g><path d="M1364 1094.3H1881" stroke="#444" stroke-width="1.200" fill="none"/><rect x="1378" y="1153" width="12" height="12" fill="#1f77b4"/></svg>
<span class="t" style="left:1355.91px;top:1088.00px;font-size:12px;color:#777;font-family:'Liberation Sans', sans-serif;">0</span>
<span class="t" style="left:1349.70px;top:1046.00px;font-size:12px;color:#777;font-family:'Liberation Sans', sans-serif;letter-spacing:-0.459px;">20</span>
<span class="t" style="left:1349.70px;top:1004.00px;font-size:12px;color:#777;font-family:'Liberation Sans', sans-serif;letter-spacing:-0.459px;">40</span>
<span class="t" style="left:1349.70px;top:962.00px;font-size:12px;color:#777;font-family:'Liberation Sans', sans-serif;letter-spacing:-0.459px;">60</span>
<span class="t" style="left:1349.70px;top:920.00px;font-size:12px;color:#777;font-family:'Liberation Sans', sans-serif;letter-spacing:-0.459px;">80</span>
<span class="t" style="left:1342.85px;top:878.00px;font-size:12px;color:#777;font-family:'Liberation Sans', sans-serif;letter-spacing:-0.141px;">100</span>
<span class="t" style="left:1342.85px;top:836.00px;font-size:12px;color:#777;font-family:'Liberation Sans', sans-serif;letter-spacing:-0.141px;">120</span>
<span class="t" style="left:1342.85px;top:794.00px;font-size:12px;color:#777;font-family:'Liberation Sans', sans-serif;letter-spacing:-0.141px;">140</span>
<span class="t" style="left:1342.85px;top:752.00px;font-size:12px;color:#777;font-family:'Liberation Sans', sans-serif;letter-spacing:-0.141px;">160</span>
<span class="t" style="left:1383.60px;top:1097.00px;font-size:12px;color:#777;font-family:'Liberation Sans', sans-serif;letter-spacing:-0.108px;">09:00</span>
<span class="t" style="left:1469.80px;top:1097.00px;font-size:12px;color:#777;font-family:'Liberation Sans', sans-serif;letter-spacing:-0.108px;">09:05</span>
<span class="t" style="left:1556.00px;top:1097.00px;font-size:12px;color:#777;font-family:'Liberation Sans', sans-serif;letter-spacing:-0.108px;">09:10</span>
<span class="t" style="left:1642.20px;top:1097.00px;font-size:12px;color:#777;font-family:'Liberation Sans', sans-serif;letter-spacing:-0.108px;">09:15</span>
<span class="t" style="left:1728.40px;top:1097.00px;font-size:12px;color:#777;font-family:'Liberation Sans', sans-serif;letter-spacing:-0.108px;">09:20</span>
<span class="t" style="left:1814.60px;top:1097.00px;font-size:12px;color:#777;font-family:'Liberation Sans', sans-serif;letter-spacing:-0.108px;">09:25</span>
<span class="t" style="left:1364.60px;top:1113.00px;font-size:12px;color:#777;font-family:'Liberation Sans', sans-serif;letter-spacing:-0.173px;">Jan 29, 2020</span>
<span class="t" style="left:1404.20px;top:1153.00px;font-size:12px;color:#444;font-family:'Liberation Sans', sans-serif;letter-spacing:0.235px;">percentile(took_ms,95)</span>
<svg style="left:66px;top:945px" width="1206" height="200" viewBox="66 945 1206 200"><path d="M126 1087.0H1261.7M126 1052.8H1261.7M126 1018.5H1261.7M126 984.2H1261.7M201.4 953V1121.3M353.1 953V1121.3M504.8 953V1121.3M656.5 953V1121.3M808.2 953V1121.3M959.9 953V1121.3M1111.6 953V1121.3" stroke="#eee" stroke-width="1" fill="none"/><path d="M125.9 1081.0L163.8 1081.0L201.8 1082.4L239.7 1076.1L277.6 1078.2L315.5 1079.3L353.4 1081.0L391.4 1083.3L429.3 1082.0L467.2 1082.8L505.1 1081.7L543.1 1078.7L581.0 977.3L618.9 1079.6L656.8 1082.4L694.8 1080.9L732.7 1079.8L770.6 1082.4L808.5 1073.9L846.5 1079.8L884.4 1085.9L922.3 1082.6L960.2 1083.6L998.2 961.0L1036.1 971.1L1074.0 1082.4L1112.0 1076.3L1149.9 966.4L1187.8 1085.9L1225.7 1080.3L1225.7 1121.3L125.9 1121.3Z" fill="rgba(40,53,147,0.48)"/><path d="M125.9 1081.0L163.8 1081.0L201.8 1082.4L239.7 1076.1L277.6 1078.2L315.5 1079.3L353.4 1081.0L391.4 1083.3L429.3 1082.0L467.2 1082.8L505.1 1081.7L543.1 1078.7L581.0 977.3L618.9 1079.6L656.8 1082.4L694.8 1080.9L732.7 1079.8L770.6 1082.4L808.5 1073.9L846.5 1079.8L884.4 1085.9L922.3 1082.6L960.2 1083.6L998.2 961.0L1036.1 971.1L1074.0 1082.4L1112.0 1076.3L1149.9 966.4L1187.8 1085.9L1225.7 1080.3" fill="none" stroke="#283593" stroke-width="2" stroke-linejoin="round"/><path d="M126 1121.3H1261.7" stroke="#444" stroke-width="1.300" fill="none"/></svg>
<div class="a" style="left:66px;top:945px;width:1206px;height:199.500px;overflow:hidden">
<span class="t" style="left:52.11px;top:171.00px;font-size:12px;color:#777;font-family:'Liberation Sans', sans-serif;">0</span>
<span class="t" style="left:45.90px;top:136.00px;font-size:12px;color:#777;font-family:'Liberation Sans', sans-serif;letter-spacing:-0.459px;">50</span>
<span class="t" style="left:39.05px;top:102.00px;font-size:12px;color:#777;font-family:'Liberation Sans', sans-serif;letter-spacing:-0.141px;">100</span>
<span class="t" style="left:39.05px;top:68.00px;font-size:12px;color:#777;font-family:'Liberation Sans', sans-serif;letter-spacing:-0.141px;">150</span>
<span class="t" style="left:39.05px;top:34.00px;font-size:12px;color:#777;font-family:'Liberation Sans', sans-serif;letter-spacing:-0.141px;">200</span>
<span class="t" style="left:120.70px;top:179.00px;font-size:12px;color:#777;font-family:'Liberation Sans', sans-serif;letter-spacing:0.092px;">09:14</span>
<span class="t" style="left:272.40px;top:179.00px;font-size:12px;color:#777;font-family:'Liberation Sans', sans-serif;letter-spacing:0.092px;">09:16</span>
<span class="t" style="left:424.10px;top:179.00px;font-size:12px;color:#777;font-family:'Liberation Sans', sans-serif;letter-spacing:0.092px;">09:18</span>
<span class="t" style="left:575.80px;top:179.00px;font-size:12px;color:#777;font-family:'Liberation Sans', sans-serif;letter-spacing:0.092px;">09:20</span>
<span class="t" style="left:727.50px;top:179.00px;font-size:12px;color:#777;font-family:'Liberation Sans', sans-serif;letter-spacing:0.092px;">09:22</span>
<span class="t" style="left:879.20px;top:179.00px;font-size:12px;color:#777;font-family:'Liberation Sans', sans-serif;letter-spacing:0.092px;">09:24</span>
<span class="t" style="left:1030.90px;top:179.00px;font-size:12px;color:#777;font-family:'Liberation Sans', sans-serif;letter-spacing:0.092px;">09:26</span>
<span class="t" style="left:1182.60px;top:179.00px;font-size:12px;color:#777;font-family:'Liberation Sans', sans-serif;letter-spacing:0.092px;">09:28</span>
<span class="t" style="left:102.15px;top:195.00px;font-size:12px;color:#777;font-family:'Liberation Sans', sans-serif;letter-spacing:-0.173px;">Jan 29, 2020</span>
</div>
<div class="a" style="left:131px;top:1155.500px;width:30px;height:7.500px;background:rgba(40,53,147,0.48);border-top:2px solid #283593"></div>
<span class="t" style="left:166.50px;top:1154.00px;font-size:12px;color:#444;font-family:'Liberation Sans', sans-serif;letter-spacing:0.036px;">avg(took_ms)</span>
<svg style="left:1324px;top:284px" width="567" height="359" viewBox="1324 284 567 359"><defs><clipPath id="mc"><rect x="1324" y="284" width="567" height="359"/></clipPath></defs><g clip-path="url(#mc)"><rect x="1324" y="284" width="567" height="359" fill="#aad3df"/><path d="M1410.1 387.5L1415.8 384.3L1418.6 382.5L1415.8 378.8L1411.8 377.7L1417.2 372.9L1426.4 365.3L1432.8 367.5L1438.5 369.6L1448.5 372.5L1457.0 373.7L1464.1 370.5L1467.0 368.4L1471.2 372.9L1476.9 371.7L1482.6 375.3L1485.4 379.6L1492.6 379.2L1495.4 378.1L1499.7 376.9L1505.4 380.0L1509.6 379.6L1512.5 378.1L1512.5 372.9L1514.6 362.6L1518.2 368.8L1519.6 372.9L1523.8 376.9L1526.7 372.1L1532.4 372.1L1533.4 376.9L1532.4 382.5L1528.1 385.1L1526.0 386.1L1526.7 392.8L1523.8 392.8L1521.0 394.5L1517.4 399.1L1515.3 403.6L1514.2 407.8L1515.0 408.6L1517.4 413.2L1522.4 413.7L1528.1 417.5L1532.0 418.0L1532.4 423.1L1533.8 426.6L1535.9 427.0L1536.6 425.4L1537.4 420.7L1535.9 418.2L1539.5 415.7L1540.2 411.8L1538.1 408.6L1538.1 405.0L1538.8 400.6L1538.1 397.9L1542.3 398.2L1546.6 400.0L1549.4 402.1L1550.2 407.8L1552.3 409.7L1555.1 407.8L1556.6 404.1L1557.3 404.1L1560.8 411.8L1563.7 417.0L1566.5 419.5L1569.4 423.1L1569.8 425.4L1567.9 426.8L1565.1 429.5L1560.8 429.5L1555.1 429.5L1553.7 431.5L1549.4 435.3L1548.0 436.8L1552.3 433.2L1557.6 432.3L1556.6 434.7L1557.3 438.0L1562.2 439.1L1563.7 437.4L1563.7 438.9L1559.4 441.3L1555.6 443.5L1554.8 441.5L1557.3 439.5L1553.7 440.5L1551.6 441.9L1549.4 443.1L1548.4 445.0L1549.4 446.7L1548.0 447.3L1543.8 449.0L1543.8 451.1L1542.3 452.9L1540.9 455.6L1541.3 458.1L1539.5 459.8L1538.1 461.0L1535.9 462.5L1533.8 465.1L1533.4 467.0L1534.5 470.8L1535.2 473.2L1534.7 475.2L1533.1 474.3L1531.4 471.1L1531.2 469.2L1529.5 467.5L1527.4 468.0L1524.6 467.0L1522.4 467.2L1521.7 468.8L1519.6 468.7L1515.6 468.0L1513.9 468.8L1511.0 471.1L1510.6 474.0L1510.0 477.1L1509.9 479.8L1511.0 482.5L1512.5 484.5L1514.6 486.0L1517.4 485.4L1519.6 485.1L1520.4 483.3L1520.6 481.7L1523.8 480.8L1525.3 481.0L1525.6 482.5L1524.6 484.0L1524.1 485.8L1523.6 487.0L1522.8 489.2L1523.8 489.5L1526.7 489.4L1529.5 489.5L1530.7 490.7L1530.2 493.7L1530.0 495.8L1531.0 498.0L1532.4 499.2L1533.8 499.7L1535.9 498.7L1538.1 499.0L1539.1 499.9L1538.2 502.0L1537.4 500.5L1535.9 499.6L1534.8 500.6L1534.8 501.9L1533.1 501.3L1531.2 500.6L1530.0 499.9L1528.1 498.3L1527.1 496.8L1525.3 494.4L1523.1 493.4L1521.0 492.5L1518.2 491.5L1515.6 489.2L1513.9 489.1L1511.8 489.7L1508.9 488.8L1506.9 488.1L1503.9 486.3L1501.1 484.8L1499.0 482.7L1499.2 481.0L1498.2 478.7L1495.4 475.6L1493.4 474.0L1491.8 471.6L1490.4 470.0L1489.0 467.5L1488.0 465.6L1485.7 464.6L1485.9 466.7L1488.3 470.0L1490.4 474.0L1491.8 476.7L1493.3 478.7L1492.6 478.8L1489.7 475.9L1489.3 474.0L1486.9 472.4L1485.4 470.5L1484.3 467.5L1483.0 464.9L1482.3 463.2L1480.5 460.8L1477.5 460.0L1475.6 456.3L1474.8 454.2L1472.6 450.1L1472.1 449.4L1472.5 444.4L1472.6 438.0L1471.6 433.4L1474.1 433.9L1473.8 431.5L1471.2 429.5L1467.7 426.6L1466.2 423.1L1464.1 420.0L1463.4 417.0L1461.3 414.5L1459.1 410.5L1456.3 407.8L1454.2 409.2L1451.3 405.6L1448.5 405.0L1444.2 405.0L1440.6 402.1L1438.5 402.7L1437.8 405.0L1435.7 407.0L1433.1 407.2L1433.5 403.6L1435.7 401.5L1433.5 402.1L1431.4 405.0L1430.0 407.8L1429.3 410.5L1426.4 413.2L1423.6 415.7L1420.7 417.0L1417.9 418.2L1414.6 419.2L1417.2 417.5L1420.0 415.7L1422.9 413.2L1425.0 409.2L1425.7 408.3L1423.6 408.3L1421.4 408.9L1418.6 408.6L1418.6 405.6L1415.8 405.0L1413.9 403.6L1414.3 400.6L1412.9 399.1L1414.3 396.0L1417.2 395.4L1420.0 394.5L1420.0 391.2L1417.2 391.2L1414.3 391.2L1412.2 390.5ZM1473.4 433.4L1471.2 432.6L1469.1 431.0L1466.5 428.4L1468.4 428.2L1470.8 429.5L1472.6 431.7ZM1564.7 435.1L1569.4 436.6L1573.6 437.2L1574.0 435.3L1572.9 433.2L1572.2 431.3L1570.1 429.9L1569.9 426.6L1567.5 428.8L1565.8 432.1ZM1528.1 480.5L1531.0 478.7L1534.5 478.5L1539.5 480.8L1543.5 482.8L1538.8 483.4L1538.1 482.2L1535.2 480.7L1532.4 479.6L1529.5 480.5ZM1543.2 485.7L1545.2 483.4L1549.4 483.6L1551.7 485.4L1549.4 486.0L1547.3 486.7L1545.9 486.0ZM1537.6 485.7L1540.5 486.0L1540.5 486.4L1537.6 486.1ZM1553.4 485.5L1555.7 485.7L1555.6 486.3L1553.4 486.3ZM1556.6 399.7L1555.1 399.1L1548.0 397.0L1543.8 391.2L1538.8 391.9L1538.1 389.5L1544.5 387.8L1543.8 384.3L1545.2 378.8L1542.3 377.7L1537.4 372.9L1536.6 369.6L1528.1 370.9L1522.4 370.9L1521.7 366.6L1523.8 354.9L1528.1 353.9L1533.8 354.9L1538.1 358.4L1543.8 363.5L1548.0 367.5L1552.3 370.9L1553.7 374.9L1558.0 379.6L1561.5 383.6L1559.4 389.5L1557.3 395.1ZM1482.6 374.9L1488.3 376.9L1495.4 376.1L1502.5 374.9L1504.6 370.9L1500.4 366.6L1499.7 358.4L1495.4 356.4L1491.1 359.8L1486.9 357.4L1481.2 358.9L1479.8 364.4L1484.0 367.5L1482.6 370.9ZM1471.2 363.1L1474.1 365.7L1477.6 364.4L1479.8 359.8L1481.9 354.9L1484.7 349.8L1476.9 349.8L1471.9 354.9ZM1521.0 338.4L1529.5 339.6L1538.1 338.4L1542.3 325.2L1549.4 317.8L1558.0 300.5L1560.8 290.2L1549.4 283.4L1535.2 284.6L1521.0 295.5L1518.2 305.2L1525.3 313.8L1526.7 325.2ZM1535.2 349.2L1518.2 348.7L1513.9 341.4L1521.0 339.6L1535.2 343.1ZM1512.5 328.7L1523.8 326.6L1525.3 313.8L1516.7 302.4L1512.5 313.8ZM1482.6 347.1L1489.7 350.3L1498.2 348.7L1498.2 341.4L1492.6 339.0L1484.0 339.6ZM1501.1 347.1L1509.6 347.1L1511.0 338.4L1502.5 337.8ZM1503.9 364.4L1511.0 365.3L1511.8 357.4L1508.9 353.4L1503.9 354.9ZM1513.2 362.1L1520.3 359.8L1520.3 352.4L1513.9 352.4ZM1507.5 374.9L1512.5 376.9L1513.2 372.9L1509.6 370.9ZM1525.3 392.8L1529.5 396.0L1533.8 394.5L1535.2 391.2L1529.5 386.1L1526.7 387.8ZM1474.1 341.4L1481.2 343.1L1484.0 335.3L1478.3 332.1ZM1545.2 325.2L1555.1 313.8L1563.7 295.5L1585.0 290.2L1606.3 277.3L1620.6 295.5L1631.9 300.5L1623.4 313.8L1624.1 328.7L1622.0 338.4L1621.3 349.8L1617.7 359.8L1617.7 368.8L1613.4 372.9L1606.3 378.1L1600.6 384.3L1595.0 387.5L1592.1 389.5L1589.3 397.6L1587.8 404.4L1586.4 405.6L1583.6 403.0L1580.0 401.2L1577.2 396.0L1575.0 389.5L1572.9 382.5L1573.6 374.9L1576.5 372.9L1571.5 368.8L1570.8 359.8L1567.9 349.8L1563.7 341.4L1555.1 341.4L1549.4 338.4L1546.6 330.1ZM1614.2 387.8L1617.7 384.7L1623.4 385.4L1628.4 385.1L1629.8 389.5L1627.7 391.9L1622.4 394.8L1616.7 393.5L1617.7 391.2L1614.9 389.9L1617.7 388.2ZM1539.1 499.9L1541.6 497.1L1542.6 496.4L1545.2 495.8L1547.3 494.5L1547.3 496.6L1549.4 495.5L1549.4 494.8L1551.6 496.8L1555.1 497.1L1557.3 497.7L1560.8 497.0L1562.2 498.7L1563.0 500.2L1565.8 502.3L1567.9 503.8L1570.8 503.8L1574.3 504.9L1575.8 506.2L1577.9 509.7L1577.9 512.3L1580.0 513.0L1580.7 513.7L1585.0 514.4L1586.4 516.1L1590.0 516.4L1593.5 517.3L1596.0 519.0L1598.8 519.7L1599.5 522.6L1599.2 525.2L1596.4 528.0L1594.2 530.9L1593.5 533.9L1593.2 537.9L1592.1 541.3L1590.7 544.4L1589.3 545.9L1587.6 545.9L1585.0 547.0L1582.9 547.8L1580.7 549.8L1579.7 553.0L1579.3 555.4L1577.2 558.7L1575.0 561.2L1572.9 563.8L1570.9 565.3L1569.1 565.3L1566.1 563.8L1565.9 564.8L1567.6 566.4L1568.4 568.1L1567.1 571.2L1565.1 572.1L1560.8 572.6L1560.4 575.6L1556.6 576.3L1558.4 578.6L1556.6 580.2L1555.8 584.1L1553.0 586.1L1555.1 589.3L1553.0 592.5L1550.9 595.8L1551.7 599.9L1550.2 600.3L1551.6 601.5L1556.3 605.6L1554.4 606.6L1552.3 607.6L1549.4 606.9L1546.6 603.9L1543.0 600.3L1541.6 595.8L1541.9 591.4L1543.0 587.8L1544.5 584.1L1543.8 581.1L1544.2 577.9L1544.5 573.5L1544.9 569.4L1545.9 566.4L1547.2 562.1L1547.3 557.1L1548.0 553.0L1548.7 549.0L1549.0 544.4L1549.2 540.6L1549.0 538.9L1547.3 537.3L1544.5 535.8L1542.0 534.3L1540.5 532.3L1539.3 529.5L1537.8 526.6L1535.9 523.0L1534.1 520.8L1533.4 518.7L1534.8 517.1L1535.2 515.9L1533.9 515.4L1534.2 513.7L1535.2 511.6L1536.6 510.6L1537.1 508.7L1538.8 506.9L1539.1 504.5L1538.2 502.0ZM1562.2 598.0L1566.5 597.8L1565.8 599.6L1562.5 599.6ZM1640.6 457.7L1641.5 457.5L1644.7 458.6L1646.2 458.9L1649.0 457.7L1651.1 456.5L1653.3 455.9L1656.1 455.9L1659.7 455.6L1663.2 455.1L1664.6 455.6L1663.9 456.7L1664.4 458.2L1663.5 460.3L1663.2 461.2L1664.6 462.0L1666.8 462.7L1670.6 463.5L1671.0 464.9L1673.2 465.9L1676.0 467.0L1677.4 465.9L1677.4 463.4L1679.6 462.7L1681.7 463.4L1684.6 464.7L1687.4 465.4L1690.2 466.1L1692.4 465.1L1694.5 465.4L1695.2 465.9L1695.2 467.5L1695.5 469.2L1696.6 471.1L1697.4 473.2L1698.8 476.3L1699.8 478.7L1701.5 481.0L1702.0 483.3L1701.9 483.9L1703.8 486.3L1705.2 490.0L1707.3 491.5L1709.4 493.7L1710.6 494.4L1710.4 495.7L1711.6 497.3L1713.0 497.3L1715.8 496.3L1718.7 496.1L1722.0 495.4L1721.5 497.3L1720.8 499.4L1719.4 502.3L1718.0 505.2L1715.8 507.6L1713.6 509.5L1710.9 511.9L1708.7 513.7L1707.3 515.1L1706.2 516.6L1705.5 518.1L1704.5 520.1L1704.9 522.0L1705.2 524.4L1705.9 527.3L1706.6 530.2L1706.9 533.1L1706.6 535.4L1704.5 536.8L1701.6 538.3L1700.9 539.8L1698.6 541.0L1699.2 544.4L1699.5 547.5L1695.9 549.8L1695.4 550.6L1695.6 553.0L1694.5 555.4L1693.1 556.9L1691.7 559.2L1689.5 561.6L1687.4 562.9L1685.4 563.8L1681.7 563.9L1677.4 565.2L1675.3 564.3L1675.2 563.6L1674.6 561.6L1675.0 559.5L1673.2 556.2L1672.5 554.8L1670.8 552.2L1670.0 549.0L1669.6 545.8L1668.2 542.9L1666.8 539.5L1665.8 537.1L1666.1 534.6L1668.2 530.2L1668.6 528.0L1667.8 524.9L1666.8 522.0L1666.4 520.8L1666.1 519.4L1664.6 517.7L1662.8 515.6L1661.8 513.4L1662.5 511.6L1662.7 509.5L1662.9 507.7L1662.5 506.6L1661.5 505.9L1659.0 506.0L1657.5 506.2L1656.1 504.0L1655.4 503.3L1653.8 503.2L1650.7 503.6L1649.0 504.2L1646.2 505.5L1644.4 505.0L1643.3 504.9L1640.5 505.5L1638.3 506.0L1636.2 505.2L1633.6 503.2L1631.2 501.6L1630.2 500.2L1629.8 498.7L1628.0 496.8L1627.0 495.8L1625.2 494.7L1625.1 493.1L1624.1 491.2L1625.5 489.2L1625.8 486.3L1626.0 484.0L1624.8 481.7L1625.5 479.8L1626.2 477.6L1628.0 474.8L1628.4 473.5L1630.2 471.3L1632.6 470.3L1634.8 468.4L1635.2 466.7L1635.1 465.1L1635.9 463.4L1637.6 461.7L1639.3 460.7L1640.5 458.2ZM1719.1 529.5L1720.5 534.6L1719.4 537.6L1718.0 542.1L1716.6 546.7L1715.8 549.0L1713.0 550.0L1711.6 549.0L1710.9 545.9L1710.9 543.6L1712.1 541.3L1711.6 538.3L1712.3 535.7L1715.1 534.6L1717.0 533.1L1718.4 530.9ZM1636.2 455.6L1635.5 452.5L1636.5 448.3L1635.8 444.4L1637.6 443.1L1641.2 443.5L1644.0 443.7L1646.4 443.7L1647.3 441.5L1647.3 438.5L1645.9 436.0L1642.6 434.7L1642.2 433.4L1644.7 432.6L1646.7 433.0L1646.4 430.6L1647.4 431.5L1649.3 431.0L1651.1 429.7L1651.3 427.9L1654.0 426.8L1655.0 425.0L1655.8 423.1L1657.5 422.1L1659.0 421.7L1661.1 421.2L1661.5 418.7L1660.7 417.0L1660.5 413.2L1662.5 412.6L1664.1 411.3L1663.9 414.5L1663.5 417.0L1662.9 418.7L1664.4 420.7L1666.1 420.2L1668.2 419.7L1669.2 420.9L1671.8 420.0L1675.3 419.0L1677.2 419.7L1678.9 417.5L1678.9 413.7L1679.6 411.8L1681.0 411.3L1682.4 413.2L1683.1 412.6L1683.6 409.7L1682.4 408.3L1682.4 407.0L1684.6 406.4L1688.8 406.4L1692.0 405.3L1689.5 403.6L1686.0 403.8L1684.4 404.7L1681.6 405.6L1679.3 402.7L1679.6 399.1L1679.2 396.0L1681.7 392.8L1685.0 389.5L1683.3 386.8L1680.3 387.8L1679.3 391.2L1676.0 395.4L1673.9 399.1L1673.5 403.0L1675.7 405.6L1674.6 407.8L1672.5 411.0L1671.8 415.2L1669.3 417.0L1667.5 417.2L1666.8 415.0L1665.9 411.3L1664.9 407.8L1664.2 405.8L1663.2 407.8L1660.4 410.2L1657.1 408.1L1656.1 403.8L1656.1 399.1L1659.0 396.7L1661.8 393.8L1663.9 391.2L1666.5 386.8L1667.5 383.3L1669.6 379.6L1671.0 376.9L1673.9 373.7L1676.0 370.9L1680.3 368.8L1685.7 366.2L1688.8 367.5L1693.1 369.6L1691.7 372.1L1695.9 373.7L1700.2 374.5L1705.9 378.8L1707.7 383.3L1705.9 385.4L1703.0 385.8L1698.8 384.3L1695.9 383.6L1698.1 386.8L1698.8 391.5L1701.6 393.2L1703.0 391.9L1706.6 390.9L1705.9 387.8L1708.7 384.7L1711.6 385.4L1711.9 379.6L1710.9 376.5L1714.4 378.1L1714.4 382.5L1717.3 380.0L1721.5 377.3L1725.8 377.7L1727.2 376.9L1731.5 375.7L1734.3 375.7L1735.8 371.7L1740.0 373.7L1741.4 375.3L1744.3 376.1L1746.4 377.7L1744.3 372.9L1744.0 367.5L1745.7 359.8L1748.6 356.4L1752.1 358.4L1752.5 366.6L1751.4 376.9L1753.5 383.3L1751.4 385.4L1754.2 380.7L1755.7 374.9L1754.2 366.6L1755.7 359.8L1759.9 360.7L1762.8 362.1L1765.6 364.4L1767.0 368.8L1764.2 359.8L1763.5 354.9L1771.3 349.8L1772.7 345.4L1779.8 341.4L1788.4 338.4L1796.9 330.8L1801.2 336.6L1808.3 338.4L1810.4 344.3L1805.4 352.4L1809.7 353.9L1816.8 355.9L1823.9 354.9L1829.6 354.9L1832.5 364.4L1835.3 367.5L1838.2 364.4L1843.8 365.3L1848.1 359.8L1849.5 358.4L1856.6 360.7L1862.3 364.4L1865.2 367.1L1872.3 366.6L1876.6 369.6L1878.0 372.9L1883.7 372.9L1887.9 370.9L1890.8 370.9L1891.5 374.9L1895.0 371.7L1899.3 372.1L1905.0 374.9L1909.3 378.1L1915.0 382.5L1919.6 385.8L1916.4 387.8L1915.0 391.9L1910.7 389.5L1907.1 386.1L1905.0 387.8L1903.6 390.2L1902.2 392.2L1904.3 397.6L1897.9 399.7L1893.6 402.7L1890.8 405.0L1885.8 405.0L1882.2 405.6L1881.2 410.5L1879.4 411.0L1880.8 415.7L1879.4 418.2L1876.6 422.4L1874.4 423.6L1871.9 427.7L1870.9 423.1L1870.4 418.2L1871.6 413.2L1875.1 407.8L1878.7 403.6L1881.5 399.7L1882.2 397.6L1877.3 399.7L1876.6 403.3L1871.6 400.3L1868.7 405.6L1865.2 407.8L1860.9 406.4L1855.9 407.0L1851.7 407.2L1848.1 411.0L1845.3 414.5L1842.4 418.7L1844.6 420.7L1847.4 420.2L1850.0 422.6L1849.5 425.4L1848.8 428.8L1848.5 433.2L1846.0 437.4L1842.4 441.5L1838.9 444.8L1836.7 444.2L1834.9 445.8L1833.5 447.7L1831.0 450.3L1830.3 451.4L1831.8 452.9L1833.0 455.6L1833.0 458.2L1832.5 458.9L1830.3 459.6L1828.8 460.0L1828.9 457.4L1829.2 455.1L1827.2 454.3L1826.8 452.9L1827.2 451.1L1825.8 450.1L1822.5 451.1L1821.4 452.3L1822.5 449.2L1821.1 448.5L1819.0 450.5L1816.8 451.6L1816.4 452.9L1818.2 455.1L1820.8 454.2L1823.2 455.1L1821.1 456.5L1818.7 459.1L1820.4 461.7L1822.2 464.7L1822.5 466.2L1821.1 467.0L1822.5 467.9L1821.8 470.5L1819.7 473.2L1819.0 475.1L1816.8 476.5L1814.7 478.4L1811.4 479.8L1809.7 480.2L1806.9 481.1L1805.9 482.8L1805.0 481.1L1803.0 480.8L1800.9 482.0L1799.5 484.8L1800.5 487.0L1803.0 489.2L1804.3 492.2L1804.6 494.7L1804.0 496.1L1801.5 497.4L1800.5 498.7L1798.3 500.0L1798.0 498.0L1796.9 497.4L1795.5 496.3L1794.8 494.8L1792.6 494.1L1791.9 492.9L1791.2 494.4L1790.5 496.6L1790.1 499.0L1791.5 500.2L1791.9 502.0L1793.4 502.6L1794.8 503.8L1796.1 505.9L1796.2 508.3L1797.2 510.3L1796.1 510.2L1793.1 508.3L1792.1 506.3L1791.6 503.8L1790.8 502.7L1788.9 500.9L1789.1 498.0L1789.2 495.1L1788.4 492.2L1788.0 488.5L1786.7 487.8L1784.8 489.2L1783.1 488.9L1783.4 486.3L1782.0 483.6L1780.3 481.7L1779.6 479.6L1777.7 479.8L1775.6 480.5L1772.7 481.0L1772.4 482.5L1769.9 484.0L1767.8 486.3L1766.0 488.2L1763.8 489.5L1763.1 492.2L1763.2 493.5L1762.5 495.8L1762.6 497.6L1761.4 499.0L1760.2 499.6L1759.2 500.7L1757.8 499.4L1757.1 497.3L1755.7 494.4L1755.0 491.5L1753.5 489.2L1752.8 486.3L1752.5 484.8L1752.4 481.7L1751.7 481.7L1749.7 482.2L1747.1 479.9L1748.6 479.0L1746.4 477.9L1744.7 476.3L1743.6 474.9L1740.0 475.1L1736.5 475.2L1732.9 474.9L1730.4 474.0L1729.8 472.4L1727.2 472.9L1725.1 472.7L1723.0 471.3L1721.2 469.2L1720.1 467.2L1718.3 467.2L1717.3 467.9L1717.3 468.7L1718.3 470.8L1720.1 472.9L1720.4 474.6L1721.5 474.0L1722.4 475.6L1722.0 476.3L1723.7 476.8L1725.8 476.8L1727.6 475.1L1728.9 473.7L1729.2 475.6L1730.1 477.3L1732.3 477.7L1734.0 479.4L1732.2 482.5L1731.1 484.8L1729.4 486.3L1727.2 487.8L1724.4 488.5L1721.5 490.3L1718.7 491.9L1715.8 492.9L1713.0 493.9L1710.9 494.1L1710.2 492.2L1709.7 490.0L1709.0 487.8L1707.3 484.8L1704.8 481.3L1703.8 478.7L1702.0 476.3L1700.9 474.0L1699.1 470.8L1698.6 468.4L1697.8 471.1L1695.9 470.0L1695.4 467.7L1694.9 465.6L1697.6 465.4L1698.6 462.9L1699.5 461.0L1700.1 458.8L1700.2 456.8L1700.5 456.3L1698.2 455.9L1695.9 457.2L1692.5 455.9L1690.2 456.3L1688.0 455.6L1687.4 453.1L1686.3 451.1L1686.3 449.8L1686.0 448.8L1683.1 448.5L1682.8 450.1L1681.4 449.4L1681.4 451.4L1683.1 453.4L1682.7 454.0L1681.7 454.9L1682.0 456.5L1680.9 456.5L1679.9 455.9L1679.2 454.2L1678.9 452.3L1677.4 450.7L1676.6 449.2L1676.7 446.9L1675.3 445.4L1672.5 443.5L1670.3 441.5L1669.3 440.1L1668.5 439.3L1666.6 439.7L1666.5 441.9L1668.3 443.5L1669.6 445.8L1671.8 446.7L1675.3 449.8L1675.3 450.5L1673.2 449.2L1672.6 450.7L1673.3 452.0L1672.5 453.3L1671.3 454.0L1671.8 452.2L1671.2 450.1L1669.6 449.0L1669.2 448.6L1666.5 446.9L1664.6 445.6L1663.6 443.5L1662.9 442.3L1661.7 441.7L1659.7 442.9L1657.5 444.2L1656.1 443.7L1654.7 443.5L1653.4 444.4L1653.6 445.8L1653.6 446.6L1652.1 447.5L1650.1 448.8L1648.6 451.1L1649.3 452.3L1648.1 453.8L1647.9 454.5L1646.2 455.9L1645.4 456.1L1642.7 456.1L1641.3 457.2L1640.0 456.3L1639.0 455.2L1637.6 455.6ZM1124.2 455.6L1123.5 452.5L1124.5 448.3L1123.8 444.4L1125.6 443.1L1129.2 443.5L1132.0 443.7L1134.4 443.7L1135.3 441.5L1135.3 438.5L1133.9 436.0L1130.6 434.7L1130.2 433.4L1132.7 432.6L1134.7 433.0L1134.4 430.6L1135.4 431.5L1137.3 431.0L1139.1 429.7L1139.3 427.9L1142.0 426.8L1143.0 425.0L1143.8 423.1L1145.5 422.1L1147.0 421.7L1149.1 421.2L1149.5 418.7L1148.7 417.0L1148.5 413.2L1150.5 412.6L1152.1 411.3L1151.9 414.5L1151.5 417.0L1150.9 418.7L1152.4 420.7L1154.1 420.2L1156.2 419.7L1157.2 420.9L1159.8 420.0L1163.3 419.0L1165.2 419.7L1166.9 417.5L1166.9 413.7L1167.6 411.8L1169.0 411.3L1170.4 413.2L1171.1 412.6L1171.6 409.7L1170.4 408.3L1170.4 407.0L1172.6 406.4L1176.8 406.4L1180.0 405.3L1177.5 403.6L1174.0 403.8L1172.4 404.7L1169.6 405.6L1167.3 402.7L1167.6 399.1L1167.2 396.0L1169.7 392.8L1173.0 389.5L1171.3 386.8L1168.3 387.8L1167.3 391.2L1164.0 395.4L1161.9 399.1L1161.5 403.0L1163.7 405.6L1162.6 407.8L1160.5 411.0L1159.8 415.2L1157.3 417.0L1155.5 417.2L1154.8 415.0L1153.9 411.3L1152.9 407.8L1152.2 405.8L1151.2 407.8L1148.4 410.2L1145.1 408.1L1144.1 403.8L1144.1 399.1L1147.0 396.7L1149.8 393.8L1151.9 391.2L1154.5 386.8L1155.5 383.3L1157.6 379.6L1159.0 376.9L1161.9 373.7L1164.0 370.9L1168.3 368.8L1173.7 366.2L1176.8 367.5L1181.1 369.6L1179.7 372.1L1183.9 373.7L1188.2 374.5L1193.9 378.8L1195.7 383.3L1193.9 385.4L1191.0 385.8L1186.8 384.3L1183.9 383.6L1186.1 386.8L1186.8 391.5L1189.6 393.2L1191.0 391.9L1194.6 390.9L1193.9 387.8L1196.7 384.7L1199.6 385.4L1199.9 379.6L1198.9 376.5L1202.4 378.1L1202.4 382.5L1205.3 380.0L1209.5 377.3L1213.8 377.7L1215.2 376.9L1219.5 375.7L1222.3 375.7L1223.8 371.7L1228.0 373.7L1229.4 375.3L1232.3 376.1L1234.4 377.7L1232.3 372.9L1232.0 367.5L1233.7 359.8L1236.6 356.4L1240.1 358.4L1240.5 366.6L1239.4 376.9L1241.5 383.3L1239.4 385.4L1242.2 380.7L1243.7 374.9L1242.2 366.6L1243.7 359.8L1247.9 360.7L1250.8 362.1L1253.6 364.4L1255.0 368.8L1252.2 359.8L1251.5 354.9L1259.3 349.8L1260.7 345.4L1267.8 341.4L1276.4 338.4L1284.9 330.8L1289.2 336.6L1296.3 338.4L1298.4 344.3L1293.4 352.4L1297.7 353.9L1304.8 355.9L1311.9 354.9L1317.6 354.9L1320.5 364.4L1323.3 367.5L1326.2 364.4L1331.8 365.3L1336.1 359.8L1337.5 358.4L1344.6 360.7L1350.3 364.4L1353.2 367.1L1360.3 366.6L1364.6 369.6L1366.0 372.9L1371.7 372.9L1375.9 370.9L1378.8 370.9L1379.5 374.9L1383.0 371.7L1387.3 372.1L1393.0 374.9L1397.3 378.1L1403.0 382.5L1407.6 385.8L1404.4 387.8L1403.0 391.9L1398.7 389.5L1395.1 386.1L1393.0 387.8L1391.6 390.2L1390.2 392.2L1392.3 397.6L1385.9 399.7L1381.6 402.7L1378.8 405.0L1373.8 405.0L1370.2 405.6L1369.2 410.5L1367.4 411.0L1368.8 415.7L1367.4 418.2L1364.6 422.4L1362.4 423.6L1359.9 427.7L1358.9 423.1L1358.4 418.2L1359.6 413.2L1363.1 407.8L1366.7 403.6L1369.5 399.7L1370.2 397.6L1365.3 399.7L1364.6 403.3L1359.6 400.3L1356.7 405.6L1353.2 407.8L1348.9 406.4L1343.9 407.0L1339.7 407.2L1336.1 411.0L1333.3 414.5L1330.4 418.7L1332.6 420.7L1335.4 420.2L1338.0 422.6L1337.5 425.4L1336.8 428.8L1336.5 433.2L1334.0 437.4L1330.4 441.5L1326.9 444.8L1324.7 444.2L1322.9 445.8L1321.5 447.7L1319.0 450.3L1318.3 451.4L1319.8 452.9L1321.0 455.6L1321.0 458.2L1320.5 458.9L1318.3 459.6L1316.8 460.0L1316.9 457.4L1317.2 455.1L1315.2 454.3L1314.8 452.9L1315.2 451.1L1313.8 450.1L1310.5 451.1L1309.4 452.3L1310.5 449.2L1309.1 448.5L1307.0 450.5L1304.8 451.6L1304.4 452.9L1306.2 455.1L1308.8 454.2L1311.2 455.1L1309.1 456.5L1306.7 459.1L1308.4 461.7L1310.2 464.7L1310.5 466.2L1309.1 467.0L1310.5 467.9L1309.8 470.5L1307.7 473.2L1307.0 475.1L1304.8 476.5L1302.7 478.4L1299.4 479.8L1297.7 480.2L1294.9 481.1L1293.9 482.8L1293.0 481.1L1291.0 480.8L1288.9 482.0L1287.5 484.8L1288.5 487.0L1291.0 489.2L1292.3 492.2L1292.6 494.7L1292.0 496.1L1289.5 497.4L1288.5 498.7L1286.3 500.0L1286.0 498.0L1284.9 497.4L1283.5 496.3L1282.8 494.8L1280.6 494.1L1279.9 492.9L1279.2 494.4L1278.5 496.6L1278.1 499.0L1279.5 500.2L1279.9 502.0L1281.4 502.6L1282.8 503.8L1284.1 505.9L1284.2 508.3L1285.2 510.3L1284.1 510.2L1281.1 508.3L1280.1 506.3L1279.6 503.8L1278.8 502.7L1276.9 500.9L1277.1 498.0L1277.2 495.1L1276.4 492.2L1276.0 488.5L1274.7 487.8L1272.8 489.2L1271.1 488.9L1271.4 486.3L1270.0 483.6L1268.3 481.7L1267.6 479.6L1265.7 479.8L1263.6 480.5L1260.7 481.0L1260.4 482.5L1257.9 484.0L1255.8 486.3L1254.0 488.2L1251.8 489.5L1251.1 492.2L1251.2 493.5L1250.5 495.8L1250.6 497.6L1249.4 499.0L1248.2 499.6L1247.2 500.7L1245.8 499.4L1245.1 497.3L1243.7 494.4L1243.0 491.5L1241.5 489.2L1240.8 486.3L1240.5 484.8L1240.4 481.7L1239.7 481.7L1237.7 482.2L1235.1 479.9L1236.6 479.0L1234.4 477.9L1232.7 476.3L1231.6 474.9L1228.0 475.1L1224.5 475.2L1220.9 474.9L1218.4 474.0L1217.8 472.4L1215.2 472.9L1213.1 472.7L1211.0 471.3L1209.2 469.2L1208.1 467.2L1206.3 467.2L1205.3 467.9L1205.3 468.7L1206.3 470.8L1208.1 472.9L1208.4 474.6L1209.5 474.0L1210.4 475.6L1210.0 476.3L1211.7 476.8L1213.8 476.8L1215.6 475.1L1216.9 473.7L1217.2 475.6L1218.1 477.3L1220.3 477.7L1222.0 479.4L1220.2 482.5L1219.1 484.8L1217.4 486.3L1215.2 487.8L1212.4 488.5L1209.5 490.3L1206.7 491.9L1203.8 492.9L1201.0 493.9L1198.9 494.1L1198.2 492.2L1197.7 490.0L1197.0 487.8L1195.3 484.8L1192.8 481.3L1191.8 478.7L1190.0 476.3L1188.9 474.0L1187.1 470.8L1186.6 468.4L1185.8 471.1L1183.9 470.0L1183.4 467.7L1182.9 465.6L1185.6 465.4L1186.6 462.9L1187.5 461.0L1188.1 458.8L1188.2 456.8L1188.5 456.3L1186.2 455.9L1183.9 457.2L1180.5 455.9L1178.2 456.3L1176.0 455.6L1175.4 453.1L1174.3 451.1L1174.3 449.8L1174.0 448.8L1171.1 448.5L1170.8 450.1L1169.4 449.4L1169.4 451.4L1171.1 453.4L1170.7 454.0L1169.7 454.9L1170.0 456.5L1168.9 456.5L1167.9 455.9L1167.2 454.2L1166.9 452.3L1165.4 450.7L1164.6 449.2L1164.7 446.9L1163.3 445.4L1160.5 443.5L1158.3 441.5L1157.3 440.1L1156.5 439.3L1154.6 439.7L1154.5 441.9L1156.3 443.5L1157.6 445.8L1159.8 446.7L1163.3 449.8L1163.3 450.5L1161.2 449.2L1160.6 450.7L1161.3 452.0L1160.5 453.3L1159.3 454.0L1159.8 452.2L1159.2 450.1L1157.6 449.0L1157.2 448.6L1154.5 446.9L1152.6 445.6L1151.6 443.5L1150.9 442.3L1149.7 441.7L1147.7 442.9L1145.5 444.2L1144.1 443.7L1142.7 443.5L1141.4 444.4L1141.6 445.8L1141.6 446.6L1140.1 447.5L1138.1 448.8L1136.6 451.1L1137.3 452.3L1136.1 453.8L1135.9 454.5L1134.2 455.9L1133.4 456.1L1130.7 456.1L1129.3 457.2L1128.0 456.3L1127.0 455.2L1125.6 455.6ZM1640.9 429.7L1644.0 429.1L1647.6 428.4L1651.0 427.3L1650.0 426.6L1651.4 424.0L1649.4 423.1L1649.0 421.4L1647.3 419.2L1646.7 417.0L1645.9 415.7L1644.7 415.7L1646.0 412.9L1646.4 411.6L1643.3 411.6L1644.7 408.9L1641.9 408.9L1640.8 411.8L1640.2 413.9L1641.2 417.2L1642.2 416.2L1641.9 418.7L1644.2 418.5L1644.4 420.7L1644.7 422.1L1642.6 422.4L1643.0 423.6L1642.2 425.4L1641.6 425.9L1644.7 426.6L1644.3 427.3L1642.9 427.5ZM1640.5 425.0L1640.2 422.4L1640.8 419.7L1640.2 417.7L1638.3 417.5L1636.9 419.2L1634.8 420.2L1635.1 422.1L1635.5 423.8L1634.4 425.4L1635.1 426.6L1637.2 425.9ZM1664.6 317.8L1668.9 328.7L1668.9 335.3L1673.2 337.8L1676.0 327.3L1680.3 326.6L1678.9 317.8L1684.6 311.3L1677.4 309.6L1668.9 315.4ZM1678.9 332.1L1683.1 333.4L1682.4 327.3L1678.9 327.3ZM1722.2 364.4L1724.4 367.5L1730.1 368.4L1727.9 362.1L1728.6 355.9L1731.5 349.8L1737.2 342.6L1745.7 337.2L1746.4 335.3L1741.4 335.3L1734.3 339.6L1728.6 345.4L1725.8 354.9L1723.7 359.8ZM1715.8 311.3L1721.5 312.1L1721.5 307.0L1716.6 307.8ZM1724.4 313.0L1731.5 313.0L1732.9 308.7L1725.8 307.0ZM1727.2 305.2L1734.3 306.1L1738.6 302.4L1731.5 298.5ZM1784.1 328.7L1791.2 328.7L1798.3 325.2L1796.9 313.8L1788.4 303.3L1779.8 313.8ZM1843.8 345.4L1852.4 348.2L1862.3 347.1L1860.9 341.4L1851.0 341.4L1845.3 341.4ZM1331.8 345.4L1340.4 348.2L1350.3 347.1L1348.9 341.4L1339.0 341.4L1333.3 341.4ZM1848.1 355.4L1852.4 356.4L1852.4 352.9L1848.1 352.4ZM1336.1 355.4L1340.4 356.4L1340.4 352.9L1336.1 352.4ZM1390.9 366.6L1396.3 366.6L1396.6 364.4L1391.6 364.4ZM1851.0 420.0L1852.4 423.1L1852.8 427.7L1853.8 431.5L1852.4 436.4L1851.0 438.5L1851.0 434.3L1851.2 429.9L1850.5 425.4L1850.5 421.9ZM1339.0 420.0L1340.4 423.1L1340.8 427.7L1341.8 431.5L1340.4 436.4L1339.0 438.5L1339.0 434.3L1339.2 429.9L1338.5 425.4L1338.5 421.9ZM1848.1 447.3L1850.2 445.4L1852.8 446.4L1855.9 443.8L1854.2 442.5L1851.0 439.5L1850.5 442.5L1848.8 444.4L1848.1 445.8ZM1336.1 447.3L1338.2 445.4L1340.8 446.4L1343.9 443.8L1342.2 442.5L1339.0 439.5L1338.5 442.5L1336.8 444.4L1336.1 445.8ZM1850.2 447.5L1851.0 451.1L1849.5 453.8L1849.2 457.4L1848.1 459.1L1846.4 459.6L1843.8 459.8L1842.4 461.7L1841.0 460.3L1838.2 460.3L1835.3 460.8L1835.3 459.6L1837.4 458.2L1839.6 458.1L1842.4 457.9L1843.6 455.6L1844.6 454.7L1846.0 454.7L1847.4 452.9L1848.1 450.1L1848.5 447.9ZM1338.2 447.5L1339.0 451.1L1337.5 453.8L1337.2 457.4L1336.1 459.1L1334.4 459.6L1331.8 459.8L1330.4 461.7L1329.0 460.3L1326.2 460.3L1323.3 460.8L1323.3 459.6L1325.4 458.2L1327.6 458.1L1330.4 457.9L1331.6 455.6L1332.6 454.7L1334.0 454.7L1335.4 452.9L1336.1 450.1L1336.5 447.9ZM1833.9 461.7L1835.3 461.0L1836.4 462.5L1836.0 465.1L1835.0 465.9L1834.2 465.1L1833.9 463.0L1833.5 462.0ZM1321.9 461.7L1323.3 461.0L1324.4 462.5L1324.0 465.1L1323.0 465.9L1322.2 465.1L1321.9 463.0L1321.5 462.0ZM1837.0 461.0L1840.0 460.3L1840.3 461.3L1838.2 462.9L1837.2 462.2ZM1325.0 461.0L1328.0 460.3L1328.3 461.3L1326.2 462.9L1325.2 462.2ZM1821.1 475.2L1822.5 475.6L1821.1 480.2L1820.0 479.0L1820.1 477.1ZM1803.6 484.0L1806.2 483.1L1806.9 483.9L1805.4 485.8L1803.7 485.5ZM1820.4 485.5L1822.5 485.5L1822.9 487.8L1821.8 490.0L1822.5 492.2L1825.4 493.7L1825.1 494.1L1823.2 492.9L1821.1 492.5L1820.4 491.2L1819.7 490.7L1820.1 488.5ZM1822.5 502.3L1824.6 500.2L1827.5 498.3L1828.9 500.9L1828.2 503.0L1827.2 504.2L1825.4 503.5L1824.6 501.6L1823.2 501.2ZM1822.5 495.4L1823.9 495.8L1825.4 496.3L1826.8 496.1L1827.5 494.4L1826.1 494.4L1827.1 497.7L1825.4 498.0L1823.9 499.0L1823.4 498.0L1822.5 497.3ZM1815.7 500.3L1819.0 497.3L1819.2 496.1L1818.2 497.3L1816.1 499.4ZM1804.0 510.2L1805.4 509.9L1807.6 508.5L1809.7 507.3L1811.8 505.5L1813.3 504.5L1815.1 502.5L1816.4 503.3L1818.5 504.9L1816.8 505.9L1816.5 507.3L1818.0 510.6L1816.5 511.2L1816.1 513.4L1814.7 515.1L1814.0 517.6L1812.0 518.1L1809.7 517.0L1808.0 517.3L1805.7 516.4L1805.4 514.4L1804.0 513.0L1804.3 511.6ZM1784.5 504.3L1787.7 504.9L1789.1 506.9L1791.2 508.5L1792.6 509.2L1795.5 511.2L1796.6 512.3L1797.6 514.9L1799.8 516.6L1799.5 520.6L1797.6 520.6L1794.5 518.0L1792.6 515.9L1791.6 513.4L1789.8 511.6L1789.1 509.7L1787.0 508.0L1784.8 505.6ZM1798.6 522.0L1800.0 520.8L1803.3 521.6L1806.6 521.4L1809.3 522.1L1811.8 523.3L1811.7 524.7L1808.3 524.1L1804.0 523.4L1800.5 522.9ZM1819.4 511.2L1820.8 510.5L1823.9 510.9L1826.8 509.9L1826.1 511.7L1821.1 511.7L1819.7 513.4L1821.8 513.6L1824.4 513.6L1822.5 514.9L1821.8 516.6L1823.6 518.0L1823.2 519.8L1821.8 518.7L1821.1 516.1L1820.1 516.6L1820.2 520.1L1819.0 520.1L1819.0 517.3L1818.0 516.1L1819.0 513.0ZM1835.3 513.4L1838.2 513.0L1840.0 513.4L1840.0 515.9L1841.7 517.0L1844.6 514.7L1848.1 515.7L1849.5 516.0L1853.1 517.3L1855.9 518.7L1856.6 520.1L1859.2 521.1L1858.8 522.3L1860.2 524.9L1863.0 527.2L1860.9 527.0L1858.1 525.7L1856.6 523.9L1854.5 523.1L1853.1 524.1L1851.7 525.4L1849.5 525.3L1847.4 523.7L1845.3 524.1L1846.3 522.3L1845.3 520.1L1842.4 518.7L1839.6 517.7L1837.9 518.0L1836.7 516.3L1838.9 515.6L1836.7 515.1L1835.3 514.1ZM1323.3 513.4L1326.2 513.0L1328.0 513.4L1328.0 515.9L1329.7 517.0L1332.6 514.7L1336.1 515.7L1337.5 516.0L1341.1 517.3L1343.9 518.7L1344.6 520.1L1347.2 521.1L1346.8 522.3L1348.2 524.9L1351.0 527.2L1348.9 527.0L1346.1 525.7L1344.6 523.9L1342.5 523.1L1341.1 524.1L1339.7 525.4L1337.5 525.3L1335.4 523.7L1333.3 524.1L1334.3 522.3L1333.3 520.1L1330.4 518.7L1327.6 517.7L1325.9 518.0L1324.7 516.3L1326.9 515.6L1324.7 515.1L1323.3 514.1ZM1860.2 520.3L1862.3 520.1L1864.5 518.3L1865.6 518.7L1864.5 520.6L1862.3 521.3L1860.2 520.8ZM1348.2 520.3L1350.3 520.1L1352.5 518.3L1353.6 518.7L1352.5 520.6L1350.3 521.3L1348.2 520.8ZM1824.6 527.0L1826.8 525.2L1829.6 524.3L1828.9 525.2L1826.8 526.6L1825.4 527.0ZM1814.0 524.4L1816.8 524.1L1819.7 524.3L1823.9 524.1L1823.6 524.9L1819.7 525.2L1816.8 525.0L1814.0 525.0ZM1830.3 509.7L1831.9 510.2L1831.5 511.9L1830.8 513.4L1830.3 511.6ZM1831.0 516.6L1835.0 516.9L1833.9 517.6L1831.0 517.3ZM1319.0 516.6L1323.0 516.9L1321.9 517.6L1319.0 517.3ZM1762.5 498.4L1763.9 499.4L1765.3 501.6L1764.9 503.2L1763.5 503.9L1762.5 502.6L1762.4 500.2ZM1666.8 453.8L1671.2 453.4L1670.5 456.1L1666.8 454.5ZM1660.7 448.3L1662.7 448.1L1662.7 451.6L1661.1 452.0ZM1661.2 444.6L1662.5 444.4L1662.5 447.1L1661.4 446.9ZM1682.4 458.1L1686.4 458.6L1686.3 459.1L1682.6 458.8ZM1694.9 459.1L1698.2 457.9L1697.4 459.3L1695.6 459.8ZM1810.7 545.2L1811.4 544.1L1815.0 542.1L1818.2 541.3L1821.5 540.6L1822.9 537.6L1824.6 537.3L1826.8 534.6L1829.6 532.4L1831.8 533.6L1833.2 533.9L1834.6 530.5L1836.7 528.8L1838.9 529.2L1841.7 529.8L1843.6 529.8L1842.4 531.7L1841.7 533.9L1843.8 535.1L1847.1 537.6L1849.2 537.6L1850.2 534.6L1850.7 530.9L1851.7 527.8L1853.1 530.7L1853.8 532.9L1855.6 533.9L1856.6 537.6L1858.1 540.4L1860.6 541.8L1862.3 544.8L1863.8 547.2L1866.3 549.5L1866.9 553.0L1867.3 555.4L1866.6 558.7L1865.6 561.4L1864.0 563.8L1862.6 567.2L1862.3 569.7L1859.5 570.6L1857.1 572.6L1855.2 571.3L1853.1 572.3L1850.2 571.3L1848.1 569.9L1847.4 567.2L1845.6 566.5L1845.3 564.3L1844.7 566.4L1843.1 565.8L1845.0 562.1L1842.4 565.2L1841.7 565.2L1839.9 562.1L1836.7 560.4L1832.5 559.7L1828.2 560.9L1825.4 562.4L1824.6 563.6L1819.7 563.6L1816.8 565.5L1814.0 565.3L1812.6 564.3L1813.6 560.4L1812.6 557.1L1811.4 553.0L1810.3 550.6L1811.4 551.1L1810.4 548.3ZM1298.7 545.2L1299.4 544.1L1303.0 542.1L1306.2 541.3L1309.5 540.6L1310.9 537.6L1312.6 537.3L1314.8 534.6L1317.6 532.4L1319.8 533.6L1321.2 533.9L1322.6 530.5L1324.7 528.8L1326.9 529.2L1329.7 529.8L1331.6 529.8L1330.4 531.7L1329.7 533.9L1331.8 535.1L1335.1 537.6L1337.2 537.6L1338.2 534.6L1338.7 530.9L1339.7 527.8L1341.1 530.7L1341.8 532.9L1343.6 533.9L1344.6 537.6L1346.1 540.4L1348.6 541.8L1350.3 544.8L1351.8 547.2L1354.3 549.5L1354.9 553.0L1355.3 555.4L1354.6 558.7L1353.6 561.4L1352.0 563.8L1350.6 567.2L1350.3 569.7L1347.5 570.6L1345.1 572.6L1343.2 571.3L1341.1 572.3L1338.2 571.3L1336.1 569.9L1335.4 567.2L1333.6 566.5L1333.3 564.3L1332.7 566.4L1331.1 565.8L1333.0 562.1L1330.4 565.2L1329.7 565.2L1327.9 562.1L1324.7 560.4L1320.5 559.7L1316.2 560.9L1313.4 562.4L1312.6 563.6L1307.7 563.6L1304.8 565.5L1302.0 565.3L1300.6 564.3L1301.6 560.4L1300.6 557.1L1299.4 553.0L1298.3 550.6L1299.4 551.1L1298.4 548.3ZM1854.8 576.0L1857.4 576.5L1859.9 576.1L1859.9 578.2L1858.8 580.6L1856.6 581.1L1855.6 579.2ZM1342.8 576.0L1345.4 576.5L1347.9 576.1L1347.9 578.2L1346.8 580.6L1344.6 581.1L1343.6 579.2ZM1894.6 564.6L1896.9 566.4L1899.0 568.7L1900.0 570.3L1902.6 570.1L1902.2 572.6L1900.7 573.5L1900.0 576.3L1897.9 577.5L1897.9 574.8L1896.5 573.5L1897.5 571.7L1897.5 569.0L1895.8 566.4ZM1382.6 564.6L1384.9 566.4L1387.0 568.7L1388.0 570.3L1390.6 570.1L1390.2 572.6L1388.7 573.5L1388.0 576.3L1385.9 577.5L1385.9 574.8L1384.5 573.5L1385.5 571.7L1385.5 569.0L1383.8 566.4ZM1894.6 575.4L1896.8 576.7L1895.8 580.2L1893.6 581.7L1892.2 583.5L1891.8 586.1L1889.4 587.4L1886.5 586.6L1885.8 585.1L1888.4 582.1L1891.5 579.8L1893.3 577.5ZM1382.6 575.4L1384.8 576.7L1383.8 580.2L1381.6 581.7L1380.2 583.5L1379.8 586.1L1377.4 587.4L1374.5 586.6L1373.8 585.1L1376.4 582.1L1379.5 579.8L1381.3 577.5ZM1882.2 541.5L1885.8 543.6L1886.5 544.8L1885.1 544.4L1882.7 542.6ZM1370.2 541.5L1373.8 543.6L1374.5 544.8L1373.1 544.4L1370.7 542.6ZM1389.2 537.6L1391.0 537.6L1390.9 538.6L1389.3 538.6ZM1746.8 592.5L1749.3 592.5L1748.6 594.0L1747.1 593.8ZM1560.8 629.2L1567.9 629.2L1566.5 632.7L1563.0 634.4L1560.8 636.8L1560.1 640.3L1558.0 642.1L1556.6 645.8L1553.7 645.8L1553.0 642.1L1555.1 638.5L1558.0 635.1L1560.1 632.7ZM1791.2 639.5L1805.4 638.5L1819.7 641.0L1833.9 638.5L1842.4 638.5L1851.0 641.3L1862.3 645.8L1862.3 653.7L1777.0 653.7L1777.0 642.1ZM1279.2 639.5L1293.4 638.5L1307.7 641.0L1321.9 638.5L1330.4 638.5L1339.0 641.3L1350.3 645.8L1350.3 653.7L1265.0 653.7L1265.0 642.1ZM1713.0 643.9L1720.1 640.3L1727.2 638.5L1731.5 642.1L1737.2 643.9L1748.6 645.8L1762.8 643.9L1774.2 640.3L1784.1 640.3L1791.2 639.5L1791.2 653.7L1713.0 653.7ZM1549.4 645.8L1553.7 645.8L1556.6 653.7L1549.4 653.7ZM1595.0 603.9L1597.8 604.6L1597.5 605.9L1595.2 604.9Z" fill="#f2efe9" stroke="#f2efe9" stroke-width="0.4" stroke-linejoin="round"/><path d="M1690.2 447.9L1689.1 447.1L1688.4 445.4L1688.7 444.0L1689.8 442.1L1691.2 439.9L1692.7 437.4L1694.5 437.4L1696.8 438.2L1695.2 439.7L1696.5 441.3L1697.4 441.7L1699.2 440.5L1700.9 440.1L1698.8 438.0L1702.3 436.4L1704.8 436.0L1703.0 438.0L1702.3 439.7L1702.0 440.5L1703.8 441.7L1705.9 443.5L1708.0 445.0L1708.2 447.1L1705.9 448.3L1703.8 448.3L1700.9 447.7L1699.1 446.4L1696.6 446.4L1693.8 447.9ZM1715.8 439.5L1718.7 437.2L1721.5 436.4L1724.4 436.8L1724.4 439.9L1722.2 440.5L1720.8 441.5L1721.5 443.5L1723.7 445.4L1724.1 447.3L1725.1 447.9L1724.4 450.1L1725.5 452.0L1725.8 454.7L1724.4 455.9L1721.5 456.1L1720.1 454.9L1718.7 453.3L1719.0 451.1L1720.1 449.4L1719.4 448.3L1718.0 446.4L1716.6 444.4L1716.3 442.5L1715.6 440.9ZM1518.2 437.0L1521.0 434.7L1523.8 433.2L1526.7 433.2L1528.4 435.3L1528.5 437.4L1525.3 437.4L1522.4 436.8ZM1524.1 446.4L1526.3 446.4L1526.4 442.5L1528.1 438.9L1525.3 438.9L1523.8 441.5ZM1528.8 438.5L1531.0 438.5L1533.8 438.5L1535.2 441.1L1532.8 441.5L1532.8 444.0L1531.7 444.0L1530.2 442.5L1530.5 440.1ZM1530.5 446.9L1532.4 447.3L1536.6 445.0L1536.6 444.6L1533.8 445.0L1531.0 446.2ZM1535.6 443.8L1539.5 443.8L1540.5 442.5L1538.8 442.5L1536.2 443.1ZM1471.9 387.8L1476.9 389.5L1481.2 387.8L1481.9 384.3L1478.3 382.5L1474.1 384.3ZM1482.6 402.1L1485.4 402.4L1489.0 400.6L1493.3 397.0L1491.1 396.3L1486.9 398.5L1483.3 400.3ZM1692.4 405.0L1695.6 404.1L1695.2 401.2L1692.4 400.6L1691.7 402.7ZM1666.8 409.2L1668.9 408.6L1668.6 407.0L1667.2 407.0Z" fill="#aad3df"/><path d="M1448.5 372.5L1448.5 404.1L1451.3 405.0L1453.4 408.1L1456.3 405.6L1459.1 409.4L1464.1 415.7L1464.1 419.0M1473.6 432.1L1513.6 432.1L1514.3 431.5L1518.2 433.6L1521.7 434.3L1523.3 433.6L1528.4 436.6L1530.2 438.5L1531.7 439.9L1531.7 444.4L1530.8 446.4L1531.7 446.9L1536.6 445.0L1536.6 443.5L1540.2 442.5L1542.8 440.5L1547.3 440.5L1548.7 439.1L1549.4 437.0L1550.6 435.5L1552.3 435.8L1552.6 439.1L1553.7 440.5M1482.5 463.4L1485.9 463.0L1491.1 465.4L1495.1 465.4L1495.1 464.6L1497.5 464.6L1500.4 468.0L1502.5 469.2L1503.2 467.9L1504.8 467.9L1507.5 471.6L1508.2 473.3L1510.8 474.1M1517.9 491.5L1518.2 490.4L1518.6 489.2L1520.3 489.1L1519.6 487.5L1519.6 486.6L1522.1 486.6L1522.1 489.2L1523.4 489.7M1522.1 486.6L1523.4 485.7M1522.0 491.6L1523.1 490.7L1524.3 493.1M1524.3 493.1L1525.7 492.5L1528.1 491.3L1530.5 490.7M1527.1 496.4L1528.5 496.6L1530.0 496.7M1531.1 500.7L1531.1 499.3L1531.5 498.6M1575.6 506.3L1574.3 508.7L1571.5 509.0L1569.4 509.5L1567.9 509.5L1565.4 510.5L1564.0 509.7L1563.7 504.9L1562.2 505.9L1559.4 506.6L1557.3 506.5L1558.0 509.5L1555.8 511.2L1553.7 510.6L1553.7 509.5L1549.7 509.9L1550.2 513.7L1549.4 518.3L1545.5 519.4L1544.0 522.7L1545.9 525.9L1548.7 525.9L1548.6 528.0L1550.2 528.0L1551.3 528.0L1556.1 526.3L1556.1 529.1L1559.4 530.5L1563.0 532.0L1563.7 535.7L1566.1 535.8L1566.2 537.6L1567.2 538.3L1566.5 541.0L1566.5 544.4L1569.6 544.8L1570.1 547.5L1571.8 547.5L1571.3 550.0L1572.5 552.5L1569.6 554.3L1567.1 557.4L1569.4 558.7L1572.9 563.3M1551.6 599.9L1546.6 596.9L1545.2 593.6L1546.6 588.2L1546.9 582.1L1547.3 576.3L1548.0 570.8L1549.0 565.5L1549.4 562.1L1549.7 557.1L1551.6 552.2L1551.9 548.3L1553.7 545.9M1551.4 600.8L1551.4 606.1M1553.7 545.9L1555.1 544.1L1557.6 545.6L1560.0 544.7L1560.8 541.3L1566.2 541.0M1553.7 545.9L1552.0 543.6L1551.3 540.6L1550.2 537.6L1550.9 535.8L1550.3 533.9L1551.2 530.5L1550.2 528.0M1550.2 537.6L1549.0 538.8M1549.4 518.3L1546.6 515.6L1544.5 514.4L1541.9 512.4L1541.6 514.4L1538.4 516.6L1537.4 519.0L1535.9 519.4L1534.8 517.1M1541.9 512.4L1539.5 511.9L1536.9 510.3M1547.6 495.4L1545.5 498.0L1546.0 500.9L1548.0 502.3L1550.2 503.6L1553.0 503.5L1552.6 507.3L1553.7 510.6M1563.7 500.3L1562.5 502.3L1562.2 503.8L1562.7 504.9M1567.6 503.9L1567.5 507.3L1568.6 509.5M1572.2 504.2L1571.8 507.3L1571.5 509.0M1560.0 544.7L1562.2 547.2L1565.8 548.7L1567.1 549.8L1565.7 552.5L1569.1 552.7L1571.3 550.0M1567.1 557.4L1566.2 560.4L1565.9 563.8M1684.6 464.9L1684.6 480.2L1701.5 480.2M1684.6 480.2L1683.1 484.0L1671.8 477.9L1670.3 478.7L1666.1 477.9L1663.2 476.3L1662.5 473.2L1663.2 467.5L1662.5 467.0L1661.1 463.4L1659.7 461.0L1661.2 455.8M1665.4 462.2L1663.2 467.5M1666.1 477.9L1657.5 484.0L1653.6 484.8L1650.7 481.7L1642.2 475.6L1636.6 471.9L1636.6 469.7L1641.9 467.5L1643.9 465.9L1647.3 463.4L1645.9 458.9M1636.6 471.9L1630.2 471.3M1642.2 475.6L1639.8 475.6L1641.2 488.5L1631.9 490.7L1628.4 488.4L1625.5 489.2M1636.6 474.0L1631.9 474.0L1631.9 478.1L1630.5 479.0L1630.5 481.3L1624.8 481.7M1631.9 490.7L1632.8 494.5L1629.5 494.2L1625.2 494.5M1632.8 494.5L1637.2 496.6L1637.8 497.7L1637.2 501.5L1632.6 502.5M1630.1 499.4L1633.8 500.5L1634.4 500.2L1637.2 501.5L1638.3 506.0M1637.8 497.7L1641.2 497.4L1645.0 498.6L1645.2 505.0M1641.2 497.4L1641.6 495.3L1644.7 492.6L1649.3 490.7L1653.6 490.1L1655.0 487.9L1655.0 484.5M1645.0 498.6L1644.9 496.6L1649.0 496.4L1650.3 496.6L1651.3 503.5M1650.3 496.6L1652.4 494.7L1654.1 495.5L1652.8 503.2M1649.3 490.7L1652.0 494.1L1652.4 494.7M1652.8 503.2L1654.1 495.5L1655.0 492.9L1659.0 493.7L1668.2 492.6L1669.6 495.8L1667.5 498.7L1665.4 502.9L1661.2 505.5M1668.2 492.6L1671.0 488.1L1671.6 482.7L1670.3 478.7M1669.6 495.8L1671.0 498.0L1668.8 498.6L1670.6 501.7L1669.6 505.2L1671.8 509.2L1667.9 509.2L1665.1 509.2L1662.9 509.0M1665.1 509.2L1665.1 510.9L1662.7 510.9M1667.9 509.2L1669.5 515.0L1664.8 517.9M1671.8 509.2L1675.5 507.3M1670.6 501.7L1674.6 500.9L1680.9 496.6L1681.6 496.7L1682.4 498.0M1683.1 484.0L1683.1 489.7L1681.0 493.7L1682.4 498.0L1688.1 505.2L1693.1 507.2L1697.4 506.3L1700.1 505.8M1700.2 505.9L1703.0 507.2L1708.6 506.7L1710.2 505.8L1717.3 500.9L1710.2 496.6L1709.3 494.4L1702.3 491.9L1700.9 494.1L1697.4 498.7L1695.9 500.9L1698.8 504.5M1700.9 494.1L1701.5 487.8L1703.9 486.3M1709.3 494.4L1705.9 491.5L1702.3 491.9M1710.2 496.6L1708.4 496.6L1710.0 495.7M1717.3 500.9L1718.7 496.1M1666.4 520.6L1672.6 520.7L1673.2 523.7L1677.4 522.3L1680.3 528.0L1683.1 528.0L1688.1 529.9L1691.0 531.5L1689.4 525.9L1692.7 524.1L1690.5 517.3L1691.2 513.0L1693.1 509.0L1692.8 507.2L1688.1 505.2M1666.4 520.6L1671.8 518.0L1674.6 512.3L1675.5 506.6L1681.0 505.9L1688.1 505.2M1691.2 513.0L1691.7 513.9L1697.4 513.7M1693.1 509.0L1697.4 506.3M1697.4 513.7L1698.8 510.2L1697.4 506.3M1691.7 513.9L1692.8 515.7L1692.4 518.6L1690.7 518.6M1665.8 537.3L1668.9 537.4L1675.3 537.6L1682.1 537.9L1685.0 538.0M1677.4 554.5L1677.4 544.4L1678.9 544.4L1678.9 538.8L1682.1 537.9M1672.5 554.8L1677.4 554.5M1677.4 549.0L1680.3 551.1L1685.3 550.0L1687.4 546.9L1690.8 544.7L1693.5 545.0L1694.5 551.9M1685.0 538.0L1687.4 538.3L1692.2 534.8L1695.9 532.4L1695.6 531.7L1696.2 525.9L1697.4 525.9M1692.2 534.8L1695.6 536.4L1695.9 541.0L1693.5 545.0M1690.8 544.7L1688.4 542.1L1685.0 538.0M1680.3 528.0L1680.3 530.9L1683.1 530.9L1682.3 537.7M1706.5 527.3L1698.6 528.9M1704.8 519.0L1702.5 516.6L1697.4 513.7M1708.0 514.7L1707.3 508.0L1708.6 506.7M1692.7 524.1L1695.8 525.7L1696.2 525.9M1688.1 556.4L1690.2 555.3L1690.8 557.2L1688.8 558.0L1688.1 556.4M1646.4 443.8L1653.6 445.6M1636.3 446.6L1639.8 446.9L1639.0 450.7L1638.5 455.2M1652.6 427.5L1655.0 429.9L1657.5 431.0L1660.7 432.1L1659.8 435.1L1657.5 438.0L1659.0 438.7L1659.0 442.1L1659.7 442.9M1669.2 420.9L1669.9 427.7L1666.4 429.3L1668.6 432.8L1667.5 435.3L1662.7 435.3L1659.8 435.1M1659.0 422.4L1657.5 425.9L1657.7 428.2L1657.5 431.0M1653.8 426.8L1657.5 425.9M1661.2 418.5L1663.1 418.7M1677.2 419.7L1681.4 419.7L1683.0 423.8L1682.6 426.6L1683.1 428.8L1681.1 431.9L1676.0 431.3L1673.2 432.6L1669.9 427.7M1673.2 434.3L1671.9 436.6L1668.5 437.4L1668.5 439.3M1673.2 432.6L1673.2 434.3L1675.7 434.7L1680.6 433.4L1681.6 434.3M1659.0 438.7L1661.1 438.0L1663.9 436.8L1666.4 436.4L1668.5 437.4M1671.9 436.6L1675.7 438.7L1677.9 438.2L1681.6 434.3M1675.7 438.7L1676.0 440.7L1671.5 440.1L1668.3 439.5M1676.0 440.7L1676.9 444.0L1675.3 445.4M1677.9 438.2L1681.3 442.1M1676.6 446.6L1678.3 446.6L1678.9 448.5L1677.7 450.7M1678.9 448.5L1681.7 447.7L1686.4 446.9L1686.0 448.8M1681.3 442.1L1680.9 445.8L1681.7 447.7M1686.4 446.9L1688.8 446.4M1664.9 407.8L1666.8 400.6L1666.1 394.5L1668.9 391.2L1671.0 385.1L1674.6 376.9L1678.2 374.5L1685.7 374.9L1688.8 370.9M1678.2 374.5L1682.6 379.2L1683.3 386.8M1690.1 374.5L1691.7 380.0L1691.0 391.2L1693.8 396.7L1688.5 403.6M1689.0 406.7L1688.1 411.8L1689.1 415.5L1692.9 416.7L1694.2 425.2L1697.9 425.9L1699.5 429.1L1705.9 430.8L1705.6 434.7L1703.3 436.2M1683.6 410.8L1688.1 411.8M1679.0 415.5L1686.0 415.2L1689.1 415.5M1681.4 419.7L1686.0 418.5L1686.8 416.5M1682.6 426.6L1687.4 426.1L1694.2 425.2M1683.0 423.8L1682.6 426.6M1681.6 434.3L1686.8 433.6L1689.1 439.5L1691.2 439.9M1681.3 442.1L1687.8 442.3L1689.7 443.1M1686.8 433.6L1691.7 437.6M1708.0 447.3L1710.9 448.1L1712.7 450.7L1711.9 454.0L1709.3 455.4L1701.2 455.9L1700.5 457.4M1705.9 443.5L1710.9 444.8L1715.1 446.7L1718.0 446.7M1710.9 448.1L1715.1 448.1L1715.1 446.7M1712.7 450.7L1715.1 452.2L1718.5 453.1M1715.1 448.1L1713.0 451.1M1715.1 433.2L1715.8 429.9L1721.5 426.6L1727.2 427.7L1732.2 427.7L1736.5 423.1L1735.8 420.7L1741.4 419.5L1747.1 417.5L1750.0 420.2L1753.5 420.7L1758.2 419.7L1759.8 422.4L1762.8 428.2L1767.8 427.7L1770.3 430.8L1773.2 431.7M1715.1 433.2L1718.7 437.2M1773.2 431.7L1776.6 430.2L1779.8 428.2L1784.1 429.9L1788.4 428.6L1788.8 425.4L1794.4 427.0L1795.5 429.3L1801.2 429.9L1806.9 431.3L1811.8 429.5L1815.0 430.4L1816.5 431.0L1819.4 425.4L1820.8 422.4L1824.8 421.9L1828.2 423.6L1830.5 429.9L1835.0 432.6L1835.3 434.9L1840.6 433.6L1838.4 440.5L1835.6 440.9L1835.3 444.4L1834.7 445.6M1261.2 431.7L1264.6 430.2L1267.8 428.2L1272.1 429.9L1276.4 428.6L1276.8 425.4L1282.4 427.0L1283.5 429.3L1289.2 429.9L1294.9 431.3L1299.8 429.5L1303.0 430.4L1304.5 431.0L1307.4 425.4L1308.8 422.4L1312.8 421.9L1316.2 423.6L1318.5 429.9L1323.0 432.6L1323.3 434.9L1328.6 433.6L1326.4 440.5L1323.6 440.9L1323.3 444.4L1322.7 445.6M1773.9 431.7L1774.2 433.2L1777.7 435.3L1778.4 440.1L1784.8 442.1L1786.0 444.8L1792.6 445.2L1798.3 447.1L1805.4 445.0L1808.3 440.5L1813.6 439.3L1819.4 437.0L1815.4 434.3L1815.0 430.4M1773.2 431.7L1770.9 433.4L1770.6 436.4L1767.0 436.0L1766.3 439.5L1762.8 440.5L1763.2 446.0L1760.6 447.7L1757.1 449.4L1754.0 450.5L1755.5 455.2M1763.2 446.0L1755.7 444.6L1750.0 445.4L1747.1 447.7L1743.6 447.9L1735.8 447.9L1732.2 439.5L1728.6 440.5L1728.6 447.7L1725.8 446.4M1754.0 450.5L1749.3 449.8L1747.1 447.7M1754.0 450.5L1750.0 452.9L1750.7 455.9M1743.6 447.9L1745.0 455.1L1750.7 455.9L1755.5 455.2M1728.6 447.7L1732.2 445.2L1735.8 447.9L1737.9 450.1L1743.6 454.9L1745.0 455.1M1725.7 455.1L1730.1 453.4L1736.0 456.3L1735.0 461.3L1735.8 465.1L1736.9 466.1L1735.6 467.9L1738.6 468.4L1737.9 473.3L1736.6 475.2M1736.0 456.3L1740.7 456.5L1743.6 454.9M1735.6 467.9L1742.9 467.7L1747.6 464.4L1750.0 460.8L1750.8 456.7L1755.5 455.2M1746.0 477.6L1750.0 476.0L1748.6 471.1L1752.8 467.5L1755.0 465.9L1754.7 462.5L1758.5 458.2L1759.9 458.2M1759.9 458.2L1761.4 463.4L1764.2 467.2L1774.2 471.0L1775.3 472.2L1779.8 471.1L1787.0 470.3L1787.7 471.6M1762.8 469.5L1774.3 473.3M1774.3 473.3L1775.3 476.7L1775.6 480.5M1780.3 481.7L1780.3 477.6L1778.7 476.8L1780.6 475.6L1776.7 475.1L1775.3 473.5M1755.5 455.2L1759.9 458.2M1780.3 481.7L1783.4 476.0L1787.0 471.1L1789.4 471.4L1788.4 477.1L1790.5 478.8L1792.9 481.4L1791.2 482.8L1788.4 483.7L1788.1 486.7L1789.7 488.8L1788.7 490.7L1789.9 492.6L1790.7 495.4L1789.4 497.7M1792.9 481.4L1794.2 479.6L1798.8 478.2L1802.6 481.0M1791.2 482.8L1792.9 484.0L1792.9 487.0L1794.2 486.0L1796.9 485.8L1798.0 488.9L1799.2 491.5L1801.9 491.2L1802.0 494.7L1799.6 495.5L1800.0 496.8L1797.5 497.4M1799.2 491.5L1795.3 491.9L1794.5 492.9L1795.3 495.5M1794.2 479.6L1796.9 482.5L1798.3 485.2L1801.9 491.2M1828.3 454.2L1831.6 452.7M1825.8 450.1L1829.5 446.7L1831.3 447.3L1833.5 445.6L1834.7 445.6M1313.8 450.1L1317.5 446.7L1319.3 447.3L1321.5 445.6L1322.7 445.6M1791.4 503.0L1792.8 504.2L1794.2 503.5M1804.9 509.5L1806.9 510.9L1811.8 510.2L1813.7 506.2L1816.1 506.3M1849.5 516.0L1849.5 525.3M1337.5 516.0L1337.5 525.3M1709.9 488.7L1711.6 487.2L1715.8 487.8L1723.0 484.8L1727.2 483.3L1728.2 480.2L1727.5 479.1L1723.8 478.8L1722.4 476.8M1723.0 484.8L1724.5 488.4M1727.5 479.1L1728.6 475.7M1717.3 469.2L1715.1 469.0L1712.6 468.8L1705.9 464.2L1704.5 464.2L1701.6 465.1L1703.0 466.7L1702.3 467.5L1700.2 468.8L1698.8 468.5M1718.1 467.5L1716.8 465.9L1714.4 462.5L1713.6 459.1L1714.4 457.7L1712.7 455.2M1704.5 464.2L1704.2 461.9L1707.3 460.1L1707.7 456.5L1709.3 455.4M1704.2 461.9L1701.3 463.7L1699.8 463.0L1699.5 465.1L1698.8 468.4M1697.8 465.6L1698.6 468.4M1699.8 463.0L1698.9 462.4M1700.2 459.8L1701.1 460.5L1699.8 462.2" fill="none" stroke="#d9a7cf" stroke-width="0.6" stroke-linejoin="round"/><circle cx="1513.1" cy="469.1" r="19.8" fill="#a61c54" fill-opacity="0.22" stroke="#a61c54" stroke-opacity="0.92" stroke-width="2.200"/><circle cx="1520.9" cy="452.8" r="10.7" fill="#a61c54" fill-opacity="0.22" stroke="#a61c54" stroke-opacity="0.92" stroke-width="2.200"/><circle cx="1663.0" cy="421.8" r="14.9" fill="#a61c54" fill-opacity="0.22" stroke="#a61c54" stroke-opacity="0.92" stroke-width="2.200"/><circle cx="1668" cy="424.6" r="13.8" fill="#a61c54" fill-opacity="0.22" stroke="#a61c54" stroke-opacity="0.92" stroke-width="2.200"/><circle cx="1664.7" cy="434.9" r="12.7" fill="#a61c54" fill-opacity="0.22" stroke="#a61c54" stroke-opacity="0.92" stroke-width="2.200"/><circle cx="1640.9" cy="457.8" r="9.8" fill="#a61c54" fill-opacity="0.22" stroke="#a61c54" stroke-opacity="0.92" stroke-width="2.200"/></g></svg>
<div class="a" style="left:1334px;top:293px;width:34px;height:64px;border:2px solid rgba(0,0,0,0.2);border-radius:4px;background:#fff;background-clip:padding-box"></div>
<div class="a" style="left:1336px;top:324px;width:30px;height:1px;background:#ccc"></div>
<span class="t" style="left:1345.27px;top:300.00px;font-size:22px;color:#000;font-family:'Liberation Sans', sans-serif;font-weight:700;">+</span>
<span class="t" style="left:1345.27px;top:330.00px;font-size:22px;color:#000;font-family:'Liberation Sans', sans-serif;font-weight:700;">−</span>
<div class="a" style="left:1690px;top:627px;width:201px;height:16px;background:rgba(255,255,255,0.7)"></div>
<span class="t" style="left:1695.00px;top:630.00px;font-size:11px;color:#0078a8;font-family:'Liberation Sans', sans-serif;letter-spacing:-0.139px;">Leaflet</span>
<span class="t" style="left:1730.20px;top:630.00px;font-size:11px;color:#333;font-family:'Liberation Sans', sans-serif;letter-spacing:0.234px;">| ©</span>
<span class="t" style="left:1748.10px;top:630.00px;font-size:11px;color:#0078a8;font-family:'Liberation Sans', sans-serif;letter-spacing:-0.096px;">OpenStreetMap</span>
<span class="t" style="left:1829.10px;top:630.00px;font-size:11px;color:#333;font-family:'Liberation Sans', sans-serif;letter-spacing:-0.080px;">contributors</span>
</body></html>
